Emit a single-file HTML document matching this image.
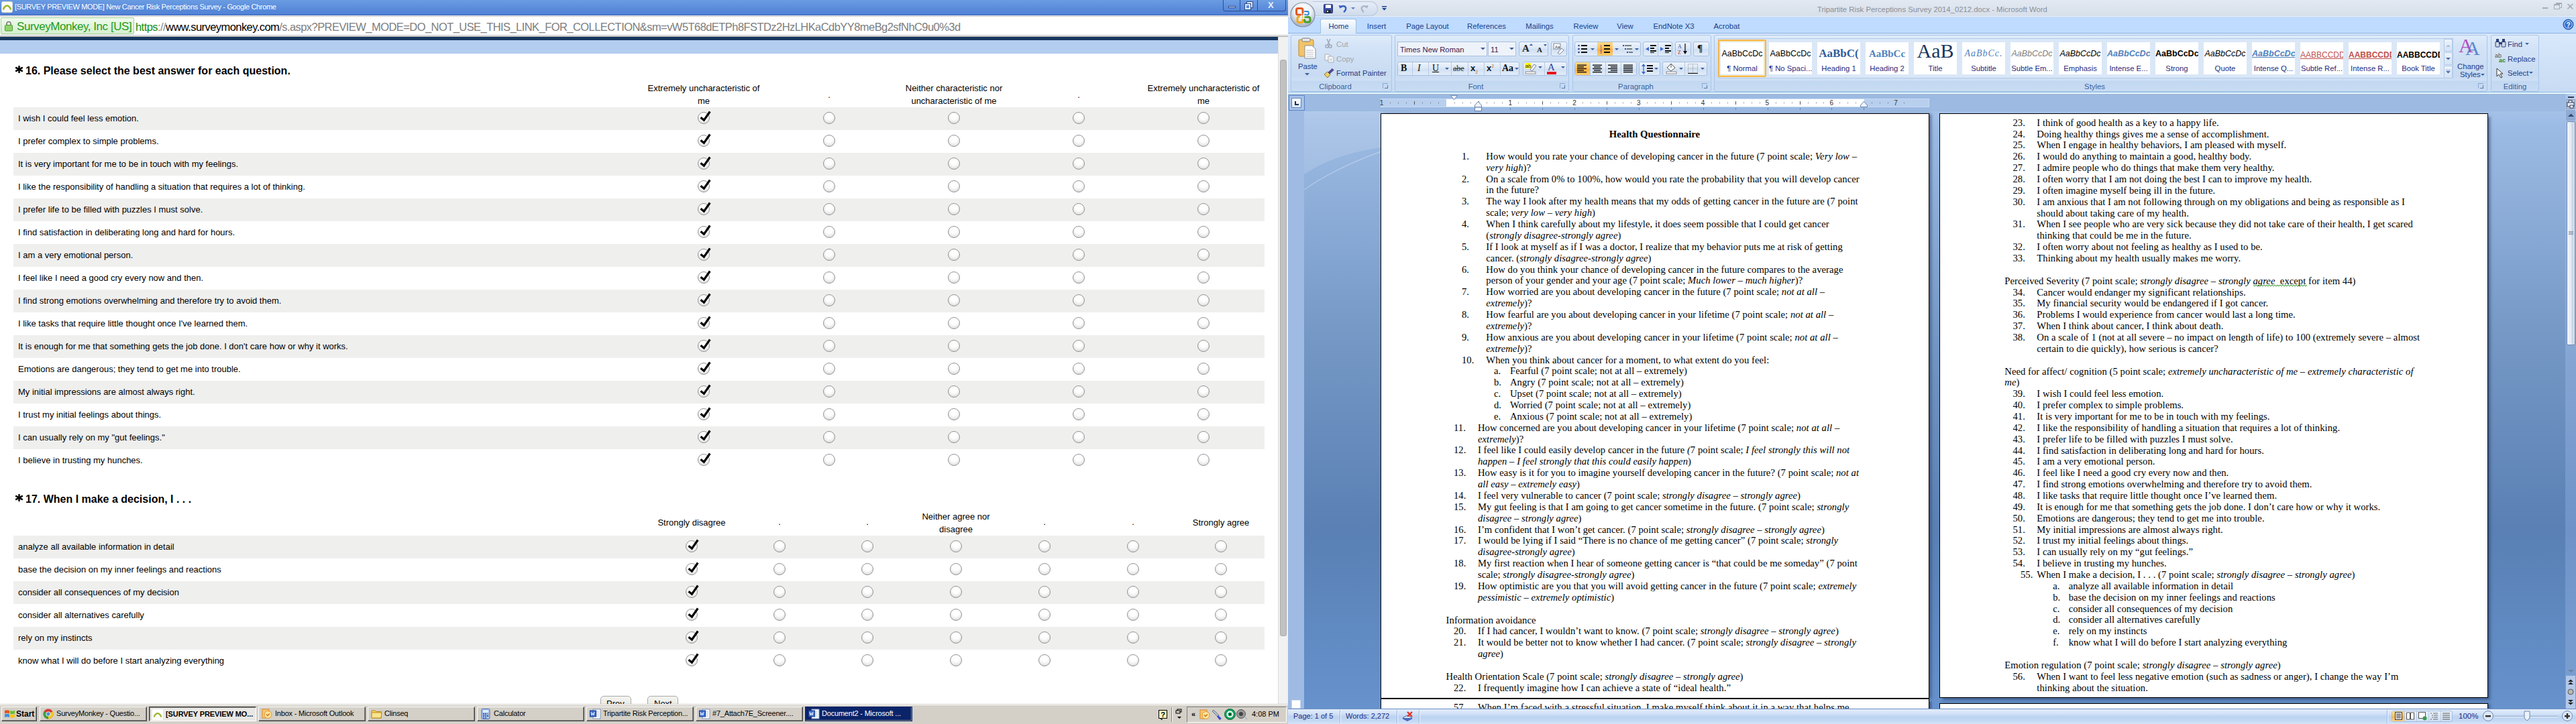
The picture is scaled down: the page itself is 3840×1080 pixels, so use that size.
<!DOCTYPE html>
<html><head><meta charset="utf-8">
<style>
*{margin:0;padding:0;box-sizing:border-box}
html,body{width:3840px;height:1080px;overflow:hidden;background:#fff;position:relative;font-family:"Liberation Sans",sans-serif}
.a{position:absolute}
.t{position:absolute;white-space:nowrap}
/* ---------- LEFT: Chrome ---------- */
#L{position:absolute;left:0;top:0;width:1920px;height:1080px;overflow:hidden;background:#fff}
#ctitle{left:0;top:0;width:1920px;height:23px;background:linear-gradient(#6a9ce2,#4f80d5);border-bottom:1px solid #3b64b2}
#ctitle .tt{left:22px;top:4px;font-size:11px;color:#fff;letter-spacing:-0.35px}
.wbtn{position:absolute;top:0;height:17px;border:1px solid #2d4f96;border-top:none;background:linear-gradient(#6e9fe4,#5686d8)}
#addr{left:0;top:23px;width:1920px;height:32px;background:#fff;box-shadow:inset 0 1px #fafafa,inset 0 2px #c6c6c8,inset 0 -1px #f0f0f0,inset 0 -2px #c3c8d0;border-bottom:1px solid #a9a59e}
#ev{left:1px;top:3px;width:199px;height:25px;border:1px solid #9fd596;border-radius:2px;background:linear-gradient(#effaec,#d6efcf)}
#ev .tx{left:23px;top:2.5px;font-size:17px;color:#1f9c17;letter-spacing:-0.45px}
#url{left:202px;top:7.5px;font-size:16.5px;letter-spacing:-0.56px;color:#000}
#navy{left:0;top:55px;width:1905px;height:5px;background:#17375f}
#lband{left:0;top:60px;width:1905px;height:20px;background:#b3cdf0}
#cscroll{left:1905px;top:55px;width:15px;height:996px;background:#f1f1f1;border-left:1px solid #dcdcdc}
#cthumb{left:1908px;top:89px;width:10px;height:860px;background:#c1c1c1;border:1px solid #ababab;border-radius:3px}
.qh{position:absolute;font-size:16px;font-weight:bold;color:#000;white-space:nowrap}
.row{position:absolute;left:20px;width:1865px;height:34px}
.row.g{background:#efefee}
.row .rt{position:absolute;left:7px;top:10px;font-size:13px;line-height:13px;color:#000;white-space:nowrap}
.hd{position:absolute;font-size:13px;line-height:19px;text-align:center;color:#000;white-space:nowrap}
.rad{position:absolute;width:18px;height:18px;border-radius:50%;border:1px solid #939393;background:radial-gradient(circle at 50% 30%,#ffffff 0%,#fdfdfd 40%,#e6e6e6 72%,#c4c4c4 100%)}
.chk{position:absolute;width:20px;height:20px}
/* taskbar */
#task{left:0;top:1050px;width:1920px;height:30px;background:#d4d0c8;border-top:1px solid #d4d0c8}
#task:before{content:"";position:absolute;left:0;top:0;width:100%;height:1px;background:#fff}
.tb{position:absolute;top:3px;height:22px;background:#d4d0c8;border:1px solid;border-color:#fff #404040 #404040 #fff;box-shadow:inset -1px -1px #808080;font-size:11px;color:#000;white-space:nowrap;overflow:hidden}
.tb .lb{position:absolute;left:24px;top:3px;letter-spacing:-0.2px}
.tb.act{border-color:#404040 #fff #fff #404040;box-shadow:inset 1px 1px #808080;background-color:#e8e6e0;background-image:repeating-conic-gradient(#fff 0 25%,#d4d0c8 0 50%);background-size:2px 2px}
.tb.sel{background:#0a246a;color:#fff;border-color:#0a246a}
</style></head><body>
<div id="L">
 <div id="ctitle" class="a">
  <svg class="a" style="left:2px;top:2px" width="17" height="17" viewBox="0 0 17 17"><rect x="0.5" y="0.5" width="16" height="16" rx="2" fill="#fbfbf6" stroke="#d9dcc6"/><path d="M3 11 Q8.5 2 14 11" fill="none" stroke="#9bb52a" stroke-width="2.6"/><path d="M2 10.5 l3 1.2 -2.4 1.6z M15 10.5 l-3 1.2 2.4 1.6z" fill="#9bb52a"/></svg>
  <div class="t tt">[SURVEY PREVIEW MODE] New Cancer Risk Perceptions Survey - Google Chrome</div>
  <div class="wbtn" style="left:1823px;width:26px;border-radius:0 0 0 4px"><div class="a" style="left:7px;top:9px;width:11px;height:3px;background:#dfe8f6;border:1px solid #2c4c8c"></div></div>
  <div class="wbtn" style="left:1848px;width:27px"><div class="a" style="left:10px;top:3px;width:8px;height:8px;border:2px solid #dfe8f6;outline:1px solid #2c4c8c"></div><div class="a" style="left:7px;top:6px;width:8px;height:8px;border:2px solid #dfe8f6;background:#5c8ad9;outline:1px solid #2c4c8c"></div></div>
  <div class="wbtn" style="left:1874px;width:43px;border-radius:0 0 4px 0"><div class="t" style="left:15px;top:0px;font-size:13px;font-weight:bold;color:#e6eef9">X</div></div>
 </div>
 <div id="addr" class="a">
  <div id="ev" class="a">
   <svg class="a" style="left:5px;top:4px" width="12" height="16" viewBox="0 0 12 16"><path d="M3 7 V4.5 a3 3 0 0 1 6 0 V7" fill="none" stroke="#7a7a7a" stroke-width="1.6"/><rect x="0.5" y="6.5" width="11" height="8.5" rx="1" fill="#8fd46a" stroke="#4f9a35"/></svg>
   <div class="t tx">SurveyMonkey, Inc [US]</div>
  </div>
  <div id="url" class="t"><span style="color:#109010">https</span><span style="color:#8a8a8a">://</span>www.surveymonkey.com<span style="color:#7d7d7d">/s.aspx?PREVIEW_MODE=DO_NOT_USE_THIS_LINK_FOR_COLLECTION&amp;sm=vW5T68dETPh8FSTDz2HzLHKaCdbYY8meBg2sfNhC9u0%3d</span></div>
 </div>
 <div id="navy" class="a"></div>
 <div id="lband" class="a"></div>
 <div id="cscroll" class="a"></div>
 <div id="cthumb" class="a"></div>
 <svg class="a" style="left:22px;top:98px" width="13" height="11" viewBox="0 0 13 11"><g stroke="#000" stroke-width="2.4"><path d="M6.5 0 V11"/><path d="M1.2 2.6 L11.8 8.4"/><path d="M1.2 8.4 L11.8 2.6"/></g></svg>
<div class="qh" style="left:38px;top:97px">16. Please select the best answer for each question.</div>
<div class="hd" style="left:939px;width:220px;top:122px">Extremely uncharacteristic of<br>me</div>
<div class="hd" style="left:1186px;width:100px;top:132px">.</div>
<div class="hd" style="left:1312px;width:220px;top:122px">Neither characteristic nor<br>uncharacteristic of me</div>
<div class="hd" style="left:1558px;width:100px;top:132px">.</div>
<div class="hd" style="left:1684px;width:220px;top:122px">Extremely uncharacteristic of<br>me</div>
<div class="row g" style="top:160px"><div class="rt">I wish I could feel less emotion.</div></div>
<div class="rad" style="left:1040px;top:167px"></div>
<div class="rad" style="left:1227px;top:167px"></div>
<div class="rad" style="left:1413px;top:167px"></div>
<div class="rad" style="left:1599px;top:167px"></div>
<div class="rad" style="left:1785px;top:167px"></div>
<svg class="chk" style="left:1041px;top:164px" width="20" height="20" viewBox="0 0 20 20"><path d="M3.5 11.2 L8.4 15.2 L17.3 2.5" fill="none" stroke="#000" stroke-width="3.2" stroke-linejoin="miter"/></svg>
<div class="row" style="top:194px"><div class="rt">I prefer complex to simple problems.</div></div>
<div class="rad" style="left:1040px;top:201px"></div>
<div class="rad" style="left:1227px;top:201px"></div>
<div class="rad" style="left:1413px;top:201px"></div>
<div class="rad" style="left:1599px;top:201px"></div>
<div class="rad" style="left:1785px;top:201px"></div>
<svg class="chk" style="left:1041px;top:198px" width="20" height="20" viewBox="0 0 20 20"><path d="M3.5 11.2 L8.4 15.2 L17.3 2.5" fill="none" stroke="#000" stroke-width="3.2" stroke-linejoin="miter"/></svg>
<div class="row g" style="top:228px"><div class="rt">It is very important for me to be in touch with my feelings.</div></div>
<div class="rad" style="left:1040px;top:235px"></div>
<div class="rad" style="left:1227px;top:235px"></div>
<div class="rad" style="left:1413px;top:235px"></div>
<div class="rad" style="left:1599px;top:235px"></div>
<div class="rad" style="left:1785px;top:235px"></div>
<svg class="chk" style="left:1041px;top:232px" width="20" height="20" viewBox="0 0 20 20"><path d="M3.5 11.2 L8.4 15.2 L17.3 2.5" fill="none" stroke="#000" stroke-width="3.2" stroke-linejoin="miter"/></svg>
<div class="row" style="top:262px"><div class="rt">I like the responsibility of handling a situation that requires a lot of thinking.</div></div>
<div class="rad" style="left:1040px;top:269px"></div>
<div class="rad" style="left:1227px;top:269px"></div>
<div class="rad" style="left:1413px;top:269px"></div>
<div class="rad" style="left:1599px;top:269px"></div>
<div class="rad" style="left:1785px;top:269px"></div>
<svg class="chk" style="left:1041px;top:266px" width="20" height="20" viewBox="0 0 20 20"><path d="M3.5 11.2 L8.4 15.2 L17.3 2.5" fill="none" stroke="#000" stroke-width="3.2" stroke-linejoin="miter"/></svg>
<div class="row g" style="top:296px"><div class="rt">I prefer life to be filled with puzzles I must solve.</div></div>
<div class="rad" style="left:1040px;top:303px"></div>
<div class="rad" style="left:1227px;top:303px"></div>
<div class="rad" style="left:1413px;top:303px"></div>
<div class="rad" style="left:1599px;top:303px"></div>
<div class="rad" style="left:1785px;top:303px"></div>
<svg class="chk" style="left:1041px;top:300px" width="20" height="20" viewBox="0 0 20 20"><path d="M3.5 11.2 L8.4 15.2 L17.3 2.5" fill="none" stroke="#000" stroke-width="3.2" stroke-linejoin="miter"/></svg>
<div class="row" style="top:330px"><div class="rt">I find satisfaction in deliberating long and hard for hours.</div></div>
<div class="rad" style="left:1040px;top:337px"></div>
<div class="rad" style="left:1227px;top:337px"></div>
<div class="rad" style="left:1413px;top:337px"></div>
<div class="rad" style="left:1599px;top:337px"></div>
<div class="rad" style="left:1785px;top:337px"></div>
<svg class="chk" style="left:1041px;top:334px" width="20" height="20" viewBox="0 0 20 20"><path d="M3.5 11.2 L8.4 15.2 L17.3 2.5" fill="none" stroke="#000" stroke-width="3.2" stroke-linejoin="miter"/></svg>
<div class="row g" style="top:364px"><div class="rt">I am a very emotional person.</div></div>
<div class="rad" style="left:1040px;top:371px"></div>
<div class="rad" style="left:1227px;top:371px"></div>
<div class="rad" style="left:1413px;top:371px"></div>
<div class="rad" style="left:1599px;top:371px"></div>
<div class="rad" style="left:1785px;top:371px"></div>
<svg class="chk" style="left:1041px;top:368px" width="20" height="20" viewBox="0 0 20 20"><path d="M3.5 11.2 L8.4 15.2 L17.3 2.5" fill="none" stroke="#000" stroke-width="3.2" stroke-linejoin="miter"/></svg>
<div class="row" style="top:398px"><div class="rt">I feel like I need a good cry every now and then.</div></div>
<div class="rad" style="left:1040px;top:405px"></div>
<div class="rad" style="left:1227px;top:405px"></div>
<div class="rad" style="left:1413px;top:405px"></div>
<div class="rad" style="left:1599px;top:405px"></div>
<div class="rad" style="left:1785px;top:405px"></div>
<svg class="chk" style="left:1041px;top:402px" width="20" height="20" viewBox="0 0 20 20"><path d="M3.5 11.2 L8.4 15.2 L17.3 2.5" fill="none" stroke="#000" stroke-width="3.2" stroke-linejoin="miter"/></svg>
<div class="row g" style="top:432px"><div class="rt">I find strong emotions overwhelming and therefore try to avoid them.</div></div>
<div class="rad" style="left:1040px;top:439px"></div>
<div class="rad" style="left:1227px;top:439px"></div>
<div class="rad" style="left:1413px;top:439px"></div>
<div class="rad" style="left:1599px;top:439px"></div>
<div class="rad" style="left:1785px;top:439px"></div>
<svg class="chk" style="left:1041px;top:436px" width="20" height="20" viewBox="0 0 20 20"><path d="M3.5 11.2 L8.4 15.2 L17.3 2.5" fill="none" stroke="#000" stroke-width="3.2" stroke-linejoin="miter"/></svg>
<div class="row" style="top:466px"><div class="rt">I like tasks that require little thought once I've learned them.</div></div>
<div class="rad" style="left:1040px;top:473px"></div>
<div class="rad" style="left:1227px;top:473px"></div>
<div class="rad" style="left:1413px;top:473px"></div>
<div class="rad" style="left:1599px;top:473px"></div>
<div class="rad" style="left:1785px;top:473px"></div>
<svg class="chk" style="left:1041px;top:470px" width="20" height="20" viewBox="0 0 20 20"><path d="M3.5 11.2 L8.4 15.2 L17.3 2.5" fill="none" stroke="#000" stroke-width="3.2" stroke-linejoin="miter"/></svg>
<div class="row g" style="top:500px"><div class="rt">It is enough for me that something gets the job done. I don't care how or why it works.</div></div>
<div class="rad" style="left:1040px;top:507px"></div>
<div class="rad" style="left:1227px;top:507px"></div>
<div class="rad" style="left:1413px;top:507px"></div>
<div class="rad" style="left:1599px;top:507px"></div>
<div class="rad" style="left:1785px;top:507px"></div>
<svg class="chk" style="left:1041px;top:504px" width="20" height="20" viewBox="0 0 20 20"><path d="M3.5 11.2 L8.4 15.2 L17.3 2.5" fill="none" stroke="#000" stroke-width="3.2" stroke-linejoin="miter"/></svg>
<div class="row" style="top:534px"><div class="rt">Emotions are dangerous; they tend to get me into trouble.</div></div>
<div class="rad" style="left:1040px;top:541px"></div>
<div class="rad" style="left:1227px;top:541px"></div>
<div class="rad" style="left:1413px;top:541px"></div>
<div class="rad" style="left:1599px;top:541px"></div>
<div class="rad" style="left:1785px;top:541px"></div>
<svg class="chk" style="left:1041px;top:538px" width="20" height="20" viewBox="0 0 20 20"><path d="M3.5 11.2 L8.4 15.2 L17.3 2.5" fill="none" stroke="#000" stroke-width="3.2" stroke-linejoin="miter"/></svg>
<div class="row g" style="top:568px"><div class="rt">My initial impressions are almost always right.</div></div>
<div class="rad" style="left:1040px;top:575px"></div>
<div class="rad" style="left:1227px;top:575px"></div>
<div class="rad" style="left:1413px;top:575px"></div>
<div class="rad" style="left:1599px;top:575px"></div>
<div class="rad" style="left:1785px;top:575px"></div>
<svg class="chk" style="left:1041px;top:572px" width="20" height="20" viewBox="0 0 20 20"><path d="M3.5 11.2 L8.4 15.2 L17.3 2.5" fill="none" stroke="#000" stroke-width="3.2" stroke-linejoin="miter"/></svg>
<div class="row" style="top:602px"><div class="rt">I trust my initial feelings about things.</div></div>
<div class="rad" style="left:1040px;top:609px"></div>
<div class="rad" style="left:1227px;top:609px"></div>
<div class="rad" style="left:1413px;top:609px"></div>
<div class="rad" style="left:1599px;top:609px"></div>
<div class="rad" style="left:1785px;top:609px"></div>
<svg class="chk" style="left:1041px;top:606px" width="20" height="20" viewBox="0 0 20 20"><path d="M3.5 11.2 L8.4 15.2 L17.3 2.5" fill="none" stroke="#000" stroke-width="3.2" stroke-linejoin="miter"/></svg>
<div class="row g" style="top:636px"><div class="rt">I can usually rely on my &quot;gut feelings.&quot;</div></div>
<div class="rad" style="left:1040px;top:643px"></div>
<div class="rad" style="left:1227px;top:643px"></div>
<div class="rad" style="left:1413px;top:643px"></div>
<div class="rad" style="left:1599px;top:643px"></div>
<div class="rad" style="left:1785px;top:643px"></div>
<svg class="chk" style="left:1041px;top:640px" width="20" height="20" viewBox="0 0 20 20"><path d="M3.5 11.2 L8.4 15.2 L17.3 2.5" fill="none" stroke="#000" stroke-width="3.2" stroke-linejoin="miter"/></svg>
<div class="row" style="top:670px"><div class="rt">I believe in trusting my hunches.</div></div>
<div class="rad" style="left:1040px;top:677px"></div>
<div class="rad" style="left:1227px;top:677px"></div>
<div class="rad" style="left:1413px;top:677px"></div>
<div class="rad" style="left:1599px;top:677px"></div>
<div class="rad" style="left:1785px;top:677px"></div>
<svg class="chk" style="left:1041px;top:674px" width="20" height="20" viewBox="0 0 20 20"><path d="M3.5 11.2 L8.4 15.2 L17.3 2.5" fill="none" stroke="#000" stroke-width="3.2" stroke-linejoin="miter"/></svg>
<svg class="a" style="left:22px;top:737px" width="13" height="11" viewBox="0 0 13 11"><g stroke="#000" stroke-width="2.4"><path d="M6.5 0 V11"/><path d="M1.2 2.6 L11.8 8.4"/><path d="M1.2 8.4 L11.8 2.6"/></g></svg>
<div class="qh" style="left:38px;top:736px">17. When I make a decision, I . . .</div>
<div class="hd" style="left:961px;width:140px;top:770px">Strongly disagree</div>
<div class="hd" style="left:1092px;width:140px;top:769px">.</div>
<div class="hd" style="left:1223px;width:140px;top:769px">.</div>
<div class="hd" style="left:1355px;width:140px;top:761px">Neither agree nor<br>disagree</div>
<div class="hd" style="left:1487px;width:140px;top:769px">.</div>
<div class="hd" style="left:1619px;width:140px;top:769px">.</div>
<div class="hd" style="left:1750px;width:140px;top:770px">Strongly agree</div>
<div class="row g" style="top:799px"><div class="rt">analyze all available information in detail</div></div>
<div class="rad" style="left:1022px;top:806px"></div>
<div class="rad" style="left:1153px;top:806px"></div>
<div class="rad" style="left:1284px;top:806px"></div>
<div class="rad" style="left:1416px;top:806px"></div>
<div class="rad" style="left:1548px;top:806px"></div>
<div class="rad" style="left:1680px;top:806px"></div>
<div class="rad" style="left:1811px;top:806px"></div>
<svg class="chk" style="left:1023px;top:803px" width="20" height="20" viewBox="0 0 20 20"><path d="M3.5 11.2 L8.4 15.2 L17.3 2.5" fill="none" stroke="#000" stroke-width="3.2" stroke-linejoin="miter"/></svg>
<div class="row" style="top:833px"><div class="rt">base the decision on my inner feelings and reactions</div></div>
<div class="rad" style="left:1022px;top:840px"></div>
<div class="rad" style="left:1153px;top:840px"></div>
<div class="rad" style="left:1284px;top:840px"></div>
<div class="rad" style="left:1416px;top:840px"></div>
<div class="rad" style="left:1548px;top:840px"></div>
<div class="rad" style="left:1680px;top:840px"></div>
<div class="rad" style="left:1811px;top:840px"></div>
<svg class="chk" style="left:1023px;top:837px" width="20" height="20" viewBox="0 0 20 20"><path d="M3.5 11.2 L8.4 15.2 L17.3 2.5" fill="none" stroke="#000" stroke-width="3.2" stroke-linejoin="miter"/></svg>
<div class="row g" style="top:867px"><div class="rt">consider all consequences of my decision</div></div>
<div class="rad" style="left:1022px;top:874px"></div>
<div class="rad" style="left:1153px;top:874px"></div>
<div class="rad" style="left:1284px;top:874px"></div>
<div class="rad" style="left:1416px;top:874px"></div>
<div class="rad" style="left:1548px;top:874px"></div>
<div class="rad" style="left:1680px;top:874px"></div>
<div class="rad" style="left:1811px;top:874px"></div>
<svg class="chk" style="left:1023px;top:871px" width="20" height="20" viewBox="0 0 20 20"><path d="M3.5 11.2 L8.4 15.2 L17.3 2.5" fill="none" stroke="#000" stroke-width="3.2" stroke-linejoin="miter"/></svg>
<div class="row" style="top:901px"><div class="rt">consider all alternatives carefully</div></div>
<div class="rad" style="left:1022px;top:908px"></div>
<div class="rad" style="left:1153px;top:908px"></div>
<div class="rad" style="left:1284px;top:908px"></div>
<div class="rad" style="left:1416px;top:908px"></div>
<div class="rad" style="left:1548px;top:908px"></div>
<div class="rad" style="left:1680px;top:908px"></div>
<div class="rad" style="left:1811px;top:908px"></div>
<svg class="chk" style="left:1023px;top:905px" width="20" height="20" viewBox="0 0 20 20"><path d="M3.5 11.2 L8.4 15.2 L17.3 2.5" fill="none" stroke="#000" stroke-width="3.2" stroke-linejoin="miter"/></svg>
<div class="row g" style="top:935px"><div class="rt">rely on my instincts</div></div>
<div class="rad" style="left:1022px;top:942px"></div>
<div class="rad" style="left:1153px;top:942px"></div>
<div class="rad" style="left:1284px;top:942px"></div>
<div class="rad" style="left:1416px;top:942px"></div>
<div class="rad" style="left:1548px;top:942px"></div>
<div class="rad" style="left:1680px;top:942px"></div>
<div class="rad" style="left:1811px;top:942px"></div>
<svg class="chk" style="left:1023px;top:939px" width="20" height="20" viewBox="0 0 20 20"><path d="M3.5 11.2 L8.4 15.2 L17.3 2.5" fill="none" stroke="#000" stroke-width="3.2" stroke-linejoin="miter"/></svg>
<div class="row" style="top:969px"><div class="rt">know what I will do before I start analyzing everything</div></div>
<div class="rad" style="left:1022px;top:976px"></div>
<div class="rad" style="left:1153px;top:976px"></div>
<div class="rad" style="left:1284px;top:976px"></div>
<div class="rad" style="left:1416px;top:976px"></div>
<div class="rad" style="left:1548px;top:976px"></div>
<div class="rad" style="left:1680px;top:976px"></div>
<div class="rad" style="left:1811px;top:976px"></div>
<svg class="chk" style="left:1023px;top:973px" width="20" height="20" viewBox="0 0 20 20"><path d="M3.5 11.2 L8.4 15.2 L17.3 2.5" fill="none" stroke="#000" stroke-width="3.2" stroke-linejoin="miter"/></svg>
<div class="a" style="left:895px;top:1038px;width:46px;height:20px;border:1px solid #a9a9a9;border-radius:5px;background:linear-gradient(#f4f4f0,#e6e6e0)"><div class="t" style="left:8px;top:3px;font-size:13px">Prev</div></div>
<div class="a" style="left:965px;top:1038px;width:46px;height:20px;border:1px solid #a9a9a9;border-radius:5px;background:linear-gradient(#f4f4f0,#e6e6e0)"><div class="t" style="left:9px;top:3px;font-size:13px">Next</div></div>
 <div id="task" class="a">
 <div class="tb" style="left:2px;width:53px;font-weight:bold;font-size:12px"><svg class="a" style="left:3px;top:2px" width="17" height="16" viewBox="0 0 17 16"><path d="M1 3 Q4 1.5 8 3 V7.5 Q4 6 1 7.5z" fill="#e8531f"/><path d="M9 3 Q12 4.5 16 3 V7.5 Q12 9 9 7.5z" fill="#6cbf2f"/><path d="M1 8.5 Q4 7 8 8.5 V13 Q4 11.5 1 13z" fill="#3d8de0"/><path d="M9 8.5 Q12 10 16 8.5 V13 Q12 14.5 9 13z" fill="#f5c417"/></svg><div class="t" style="left:21px;top:3px">Start</div></div>
 <div class="tb" style="left:59px;width:160px"><svg class="a" style="left:4px;top:2px" width="16" height="16" viewBox="0 0 16 16"><circle cx="8" cy="8" r="7.5" fill="#d93b30"/><path d="M8 8 L1.5 4.3 A7.5 7.5 0 0 0 8 15.5z" fill="#3ba33b"/><path d="M8 8 L14.5 4.3 A7.5 7.5 0 0 1 8 15.5z" fill="#f5c71a"/><circle cx="8" cy="8" r="3.6" fill="#fff"/><circle cx="8" cy="8" r="2.7" fill="#4a8ee0"/></svg><div class="lb">SurveyMonkey - Questio...</div></div>
 <div class="tb act" style="left:222px;width:160px;font-weight:bold"><svg class="a" style="left:4px;top:3px" width="16" height="16" viewBox="0 0 17 17"><rect x="0" y="0" width="17" height="17" fill="#fff"/><path d="M3 11 Q8.5 2 14 11" fill="none" stroke="#9bb52a" stroke-width="2.6"/><path d="M2 10.5 l3 1.2 -2.4 1.6z M15 10.5 l-3 1.2 2.4 1.6z" fill="#9bb52a"/></svg><div class="lb" style="top:4px;letter-spacing:-0.1px">[SURVEY PREVIEW MO...</div></div>
 <div class="tb" style="left:385px;width:160px"><svg class="a" style="left:4px;top:2px" width="16" height="16" viewBox="0 0 16 16"><rect x="1" y="1" width="10" height="13" fill="#f7c870" stroke="#d9862a"/><circle cx="9.5" cy="9" r="5.5" fill="#fbe39a" stroke="#e0962f"/><path d="M7 8.5 l2 2 3-3" stroke="#c86a12" fill="none" stroke-width="1.3"/></svg><div class="lb">Inbox - Microsoft Outlook</div></div>
 <div class="tb" style="left:548px;width:160px"><svg class="a" style="left:4px;top:2px" width="17" height="15" viewBox="0 0 17 15"><path d="M1 3 h5 l1.5 1.5 h8 v9.5 h-14.5z" fill="#f5d66a" stroke="#b98a1b"/><path d="M1 6 h15 l-1 8 h-14z" fill="#fbe58e" stroke="#b98a1b"/></svg><div class="lb">Clinseq</div></div>
 <div class="tb" style="left:711px;width:160px"><svg class="a" style="left:5px;top:2px" width="14" height="16" viewBox="0 0 14 16"><rect x="1" y="0.5" width="12" height="15" rx="1.5" fill="#a8c4ec" stroke="#4a6fb8"/><rect x="3" y="2.5" width="8" height="3" fill="#e6f0fb"/><g fill="#3558a8"><rect x="3" y="7" width="2" height="2"/><rect x="6" y="7" width="2" height="2"/><rect x="9" y="7" width="2" height="2" fill="#e8752a"/><rect x="3" y="10" width="2" height="2"/><rect x="6" y="10" width="2" height="2"/><rect x="9" y="10" width="2" height="2"/><rect x="3" y="13" width="2" height="1.5"/><rect x="6" y="13" width="2" height="1.5"/></g></svg><div class="lb">Calculator</div></div>
 <div class="tb" style="left:874px;width:160px"><svg class="a wi" style="left:4px;top:2px" width="17" height="16" viewBox="0 0 17 16"><rect x="5" y="1" width="11" height="14" fill="#fff" stroke="#7d95c0"/><path d="M7 5h7M7 8h7M7 11h7" stroke="#9fb4d8"/><rect x="0.5" y="3" width="9" height="9" fill="#3b6fd0" stroke="#1d3f8e"/><path d="M2 5 l1.2 5 1.3-3.5 1.3 3.5 1.2-5" stroke="#fff" fill="none" stroke-width="1"/></svg><div class="lb">Tripartite Risk Perception...</div></div>
 <div class="tb" style="left:1037px;width:160px"><svg class="a" style="left:4px;top:2px" width="17" height="16" viewBox="0 0 17 16"><rect x="5" y="1" width="11" height="14" fill="#fff" stroke="#7d95c0"/><path d="M7 5h7M7 8h7M7 11h7" stroke="#9fb4d8"/><rect x="0.5" y="3" width="9" height="9" fill="#3b6fd0" stroke="#1d3f8e"/><path d="M2 5 l1.2 5 1.3-3.5 1.3 3.5 1.2-5" stroke="#fff" fill="none" stroke-width="1"/></svg><div class="lb">#7_Attach7E_Screener....</div></div>
 <div class="tb sel" style="left:1200px;width:160px"><svg class="a" style="left:4px;top:2px" width="17" height="16" viewBox="0 0 17 16"><rect x="5" y="1" width="11" height="14" fill="#fff" stroke="#7d95c0"/><path d="M7 5h7M7 8h7M7 11h7" stroke="#9fb4d8"/><rect x="0.5" y="3" width="9" height="9" fill="#3b6fd0" stroke="#1d3f8e"/><path d="M2 5 l1.2 5 1.3-3.5 1.3 3.5 1.2-5" stroke="#fff" fill="none" stroke-width="1"/></svg><div class="lb">Document2 - Microsoft ...</div></div>
 <!-- quick help -->
 <svg class="a" style="left:1727px;top:8px" width="14" height="16" viewBox="0 0 14 16"><rect x="0.5" y="0.5" width="12" height="12" fill="#ffffc0" stroke="#000"/><path d="M3 13 l2 2 v-2" fill="#ffffc0" stroke="#000"/><text x="6.5" y="10.5" font-size="11" font-weight="bold" text-anchor="middle" font-family="Liberation Sans">?</text></svg>
 <div class="a" style="left:1746px;top:4px;width:2px;height:22px;border-left:1px solid #808080;border-right:1px solid #fff"></div>
 <svg class="a" style="left:1752px;top:6px" width="12" height="18" viewBox="0 0 12 18"><rect x="3" y="1" width="6" height="4" fill="none" stroke="#000"/><rect x="1" y="3" width="6" height="4" fill="#d4d0c8" stroke="#000"/><path d="M3 12 h6 l-3 3z" fill="#000"/></svg>
 <div class="a" style="left:1769px;top:3px;width:149px;height:24px;border:1px solid;border-color:#808080 #fff #fff #808080"></div>
 <div class="t" style="left:1776px;top:8px;font-size:11px;font-weight:bold;letter-spacing:-1px">&#171;</div>
 <svg class="a" style="left:1788px;top:7px" width="16" height="16" viewBox="0 0 16 16"><rect x="1" y="1" width="10" height="13" fill="#f7c870" stroke="#d9862a"/><circle cx="9.5" cy="9" r="5.5" fill="#fbe39a" stroke="#e0962f"/><path d="M7 8.5 l2 2 3-3" stroke="#c86a12" fill="none" stroke-width="1.3"/></svg>
 <svg class="a" style="left:1807px;top:6px" width="16" height="17" viewBox="0 0 16 17"><path d="M2 2 l8 8 -2 2 -8 -8z" fill="#b8c0cc" stroke="#6a7484"/><path d="M9 10 l5 5 -3 2 -4-5z" fill="#3a4ad8"/></svg>
 <svg class="a" style="left:1825px;top:6px" width="17" height="17" viewBox="0 0 17 17"><circle cx="8.5" cy="8.5" r="8" fill="#17a060" stroke="#0b6a3a"/><circle cx="8.5" cy="8.5" r="5" fill="#fff"/><circle cx="8.5" cy="8.5" r="3" fill="#17a060"/><circle cx="8.5" cy="8.5" r="1.2" fill="#000"/></svg>
 <svg class="a" style="left:1843px;top:6px" width="17" height="17" viewBox="0 0 17 17"><circle cx="7" cy="8" r="6.5" fill="#9a9a9a" stroke="#555"/><circle cx="7" cy="8" r="3" fill="#444"/><path d="M11 12 q3 1 5 4" stroke="#8aa0d8" fill="none"/></svg>
 <div class="t" style="left:1866px;top:8px;font-size:11px">4:08 PM</div>
</div>

</div>
<style>
#W{position:absolute;left:1920px;top:0;width:1920px;height:1080px;overflow:hidden;background:#c4d8f1}
#W .a{position:absolute}
#W .t{position:absolute;white-space:nowrap}
.wtab{position:absolute;top:33px;font-size:11.3px;color:#15428b;white-space:nowrap;text-align:center;width:100px;margin-left:-50px;line-height:12px}
.grp{position:absolute;top:52px;height:85px;border:1px solid #a8c6ea;border-radius:3px;background:linear-gradient(#dfebfa 0,#d5e4f7 14px,#c8dbf2 60px,#cfe0f5 67px,#c2d8f1 68px,#c9dcf3 84px)}
.glab{position:absolute;bottom:1px;left:0;width:100%;text-align:center;font-size:11.3px;color:#3a5f9e;line-height:12px}
.launch{position:absolute;right:5px;bottom:4px;width:8px;height:8px;border-left:1px solid #8ba9d2;border-top:1px solid #8ba9d2}
.launch:after{content:"";position:absolute;left:2px;top:2px;width:4px;height:4px;border-right:1px solid #5577aa;border-bottom:1px solid #5577aa}
.rl{position:absolute;font-size:11.3px;color:#1f3b88;white-space:nowrap;line-height:12px}
.btnbox{position:absolute;border:1px solid #a6bfe0;border-radius:3px;background:linear-gradient(#eef4fc,#dae6f6 50%,#cfdff3 51%,#e3edf9)}
.stb{position:absolute;top:63px;width:64px;height:48px;background:#fff;text-align:center;overflow:hidden}
.stb .s1{position:absolute;left:0;top:9px;width:64px;font-size:15px;line-height:16px;white-space:nowrap;overflow:hidden}
.stb .s2{position:absolute;left:0;top:33px;width:64px;font-size:11.3px;color:#1f2a80;line-height:12px;white-space:nowrap}
.page{position:absolute;background:#fff;border:1px solid #000;box-shadow:3px 3px 3px rgba(30,50,90,.55)}
.ln{position:absolute;white-space:nowrap;font-family:"Liberation Serif",serif;font-size:14.67px;line-height:17px;color:#000;letter-spacing:0.04px}
.ln i{font-style:italic}
.sb{position:absolute;font-size:11px;color:#242c80;white-space:nowrap;line-height:12px}
</style>
<div id="W">
<div class="a" style="left:0;top:0;width:1920px;height:25px;background:linear-gradient(#e3e9f2,#dbe3ed 60%,#d7dfea);border-bottom:1px solid #e9eff7"></div>
<div class="a" style="left:0;top:25px;width:1920px;height:25px;background:#bfdbff;border-bottom:1px solid #8db2e3"></div>
<div class="a" style="left:37px;top:2px;width:97px;height:22px;border-radius:0 11px 11px 0;background:linear-gradient(#e6edf7,#cfdbeb);border:1px solid #b7c8e0;border-left:none"></div>
<svg class="a" style="left:53px;top:6px" width="14" height="14" viewBox="0 0 14 14"><rect x="0.5" y="0.5" width="13" height="13" rx="1" fill="#3c4fa8" stroke="#22306e"/><rect x="3" y="1" width="8" height="5" fill="#fff"/><rect x="3.5" y="9" width="7" height="4" fill="#222"/><rect x="5" y="10" width="2" height="2" fill="#fff"/></svg>
<svg class="a" style="left:75px;top:6px" width="14" height="14" viewBox="0 0 14 14"><path d="M3 5 Q8 1 11 5 Q12 9 8 12" fill="none" stroke="#3560c0" stroke-width="2.4"/><path d="M0.5 2 L5 2.5 L2.5 7z" fill="#3560c0"/></svg>
<svg class="a" style="left:94px;top:11px" width="6" height="4" viewBox="0 0 6 4"><path d="M0 0h6l-3 3z" fill="#5a7db8"/></svg>
<svg class="a" style="left:107px;top:6px" width="13" height="14" viewBox="0 0 13 14"><path d="M10 5 Q6 1 3 5 Q2 9 6 12" fill="none" stroke="#a6b4c8" stroke-width="2.2"/><path d="M12.5 2 L8.5 2.5 L11 7z" fill="#a6b4c8"/></svg>
<svg class="a" style="left:140px;top:9px" width="7" height="7" viewBox="0 0 7 7"><rect x="0" y="0" width="7" height="1.5" fill="#15428b"/><path d="M0 3h7l-3.5 3.5z" fill="#15428b"/></svg>
<svg class="a" style="left:2px;top:2px" width="40" height="40" viewBox="0 0 40 40"><defs><radialGradient id="ob" cx="50%" cy="30%" r="65%"><stop offset="0" stop-color="#ffffff"/><stop offset=".55" stop-color="#eef1f6"/><stop offset="1" stop-color="#aab6c8"/></radialGradient></defs><circle cx="20" cy="20" r="18" fill="url(#ob)" stroke="#8593a8" stroke-width="1.2"/><g fill="none" stroke-linecap="round"><path d="M20 17 V13 Q20 10.5 17.5 10.5 H13 Q10.5 10.5 10.5 13 V17.5 Q10.5 20 13 20 H16.5" stroke="#e2581c" stroke-width="3"/><path d="M23 15 H27 Q28.7 15 28.7 16.7 V18.5 Q28.7 20.2 27 20.2 H26" stroke="#2f86d8" stroke-width="2"/><path d="M14.5 23 Q12 23 12 25.5 V29 Q12 31.5 14.5 31.5 H17.5 Q20 31.5 20 29 V27.5" stroke="#f6a90f" stroke-width="3"/><path d="M25.5 23.5 H28.5 Q31 23.5 31 26 V28.5 Q31 31 28.5 31 H25 Q22.7 31 22.7 28.5 V27.5" stroke="#4c9e2b" stroke-width="3"/></g><circle cx="19.6" cy="19.8" r="1.3" fill="#e2581c"/><circle cx="23.6" cy="19.8" r="1.3" fill="#2f86d8"/><circle cx="19.6" cy="23.6" r="1.3" fill="#f6c04a"/><circle cx="23.6" cy="23.6" r="1.3" fill="#4c9e2b"/></svg>
<div class="t" style="left:789px;top:8px;font-size:11.3px;color:#8a8f98">Tripartite Risk Perceptions Survey 2014_0212.docx - Microsoft Word</div>
<div class="a" style="left:1870px;top:11px;width:8px;height:2px;background:#a3acb8"></div>
<div class="a" style="left:1890px;top:4px;width:9px;height:8px;border:1px solid #a3acb8;border-top-width:2px"></div><div class="a" style="left:1887px;top:6px;width:9px;height:8px;border:1px solid #a3acb8;border-top-width:2px;background:#dfe5ee"></div>
<div class="t" style="left:1905px;top:1px;font-size:15px;color:#a3acb8">&#x2715;</div>
<div class="a" style="left:48px;top:28px;width:54px;height:23px;border:1px solid #9ebfdb;border-bottom:none;border-radius:3px 3px 0 0;background:linear-gradient(#fbfdff,#e3eefb 60%,#d9e7f8)"></div>
<div class="wtab" style="left:75.5px">Home</div>
<div class="wtab" style="left:132px">Insert</div>
<div class="wtab" style="left:208px">Page Layout</div>
<div class="wtab" style="left:296px">References</div>
<div class="wtab" style="left:375px">Mailings</div>
<div class="wtab" style="left:444px">Review</div>
<div class="wtab" style="left:502.5px">View</div>
<div class="wtab" style="left:575px">EndNote X3</div>
<div class="wtab" style="left:654px">Acrobat</div>
<svg class="a" style="left:1900px;top:28px" width="17" height="17" viewBox="0 0 17 17"><circle cx="8.5" cy="8.5" r="7.5" fill="#2f6fcf" stroke="#1a4a9a"/><circle cx="8.5" cy="8.5" r="5.8" fill="none" stroke="#fff" stroke-width="0.8"/><text x="8.5" y="12.5" font-size="10" font-weight="bold" fill="#fff" text-anchor="middle" font-family="Liberation Sans">?</text></svg>
<div class="a" style="left:0;top:50px;width:1920px;height:88px;background:linear-gradient(#d9e8fb,#c7dbf3);border-bottom:1px solid #90b6dc"></div><div class="a" style="left:0;top:138px;width:1920px;height:2px;background:#e2f8ff"></div>
<div class="grp" style="left:4px;width:151px"><div class="glab" style="padding-right:18px">Clipboard</div><div class="launch"></div></div>
<div class="grp" style="left:159px;width:260px"><div class="glab" style="padding-right:18px">Font</div><div class="launch"></div></div>
<div class="grp" style="left:424px;width:207px"><div class="glab" style="padding-right:18px">Paragraph</div><div class="launch"></div></div>
<div class="grp" style="left:635px;width:1153px"><div class="glab" style="padding-right:18px">Styles</div><div class="launch"></div></div>
<div class="grp" style="left:1793px;width:72px"><div class="glab" style="padding-right:0px">Editing</div></div>
<svg class="a" style="left:15px;top:56px" width="28" height="32" viewBox="0 0 28 32"><rect x="1" y="3" width="22" height="25" rx="2" fill="#f3c466" stroke="#c48a2c"/><rect x="6" y="1" width="12" height="5" rx="1.5" fill="#e8e8e8" stroke="#777"/><path d="M10 12 h11 l5 5 v14 h-16z" fill="#fff" stroke="#8a8f99"/><path d="M12 19h11M12 22h11M12 25h11M12 28h11" stroke="#b8bcc4"/></svg>
<div class="t" style="left:15px;top:93.3px;font-size:11.3px;line-height:12px;color:#1f3b88;">Paste</div>
<svg class="a" style="left:25px;top:109px" width="7" height="4" viewBox="0 0 7 4"><path d="M0 0h7l-3.5 3.5z" fill="#3d5e9c"/></svg>
<svg class="a" style="left:55px;top:58px" width="11" height="14" viewBox="0 0 11 14"><path d="M3 0 L7 9 M8 0 L4 9" stroke="#9aa3b0" stroke-width="1.3"/><circle cx="3" cy="11" r="2.2" fill="none" stroke="#9aa3b0" stroke-width="1.3"/><circle cx="8" cy="11" r="2.2" fill="none" stroke="#9aa3b0" stroke-width="1.3"/></svg>
<div class="t" style="left:72px;top:59.8px;font-size:11.3px;line-height:12px;color:#a1a6ad;">Cut</div>
<svg class="a" style="left:54px;top:80px" width="15" height="14" viewBox="0 0 15 14"><path d="M1 1h6l2 2v7h-8z" fill="#f4f6f9" stroke="#a7adb6"/><path d="M6 4h6l2 2v7h-8z" fill="#f4f6f9" stroke="#a7adb6"/><path d="M8 8h4M8 10h4" stroke="#c0c5cc"/></svg>
<div class="t" style="left:72px;top:81.8px;font-size:11.3px;line-height:12px;color:#a1a6ad;">Copy</div>
<svg class="a" style="left:53px;top:101px" width="16" height="16" viewBox="0 0 16 16"><path d="M1 10 L6 6 L10 10 L6 15z" fill="#e8d06a" stroke="#8a7a30"/><path d="M7 7 L13 1.5 L15 3.5 L9 9z" fill="#5a4aa0" stroke="#3a2d70"/></svg>
<div class="t" style="left:72px;top:102.8px;font-size:11.3px;line-height:12px;color:#1f3b88;">Format Painter</div>
<div class="a" style="left:163px;top:62px;width:134px;height:22px;border:1px solid #abc1de;background:#eef3fa"></div>
<div class="t" style="left:167px;top:68.3px;font-size:11.3px;line-height:12px;color:#40184f;">Times New Roman</div>
<svg class="a" style="left:287px;top:71px" width="7" height="4" viewBox="0 0 7 4"><path d="M0 0h7l-3.5 3.5z" fill="#3d5e9c"/></svg>
<div class="a" style="left:298px;top:62px;width:42px;height:22px;border:1px solid #abc1de;background:#eef3fa"></div>
<div class="t" style="left:302px;top:68.3px;font-size:11.3px;line-height:12px;color:#40184f;">11</div>
<svg class="a" style="left:330px;top:71px" width="7" height="4" viewBox="0 0 7 4"><path d="M0 0h7l-3.5 3.5z" fill="#3d5e9c"/></svg>
<div class="btnbox" style="left:344px;top:62px;width:44px;height:22px"></div>
<div class="t" style="left:349px;top:64px;font-family:'Liberation Serif',serif;font-size:15px;font-weight:bold;color:#222">A</div><div class="t" style="left:371px;top:68px;font-family:'Liberation Serif',serif;font-size:11px;font-weight:bold;color:#222">A</div>
<svg class="a" style="left:360px;top:65px" width="5" height="3"><path d="M0 3h5l-2.5-3z" fill="#3d5e9c"/></svg><svg class="a" style="left:381px;top:66px" width="5" height="3"><path d="M0 0h5l-2.5 3z" fill="#3d5e9c"/></svg>
<div class="btnbox" style="left:392px;top:62px;width:24px;height:22px"></div>
<svg class="a" style="left:395px;top:64px" width="18" height="18" viewBox="0 0 18 18"><rect x="1" y="1" width="10" height="8" fill="#fff" stroke="#7a8699"/><text x="3" y="8" font-size="6" font-family="Liberation Sans" fill="#333">Aa</text><path d="M7 15 L13 8 L16 11 L10 17z" fill="#fff" stroke="#7a8699"/></svg>
<div class="btnbox" style="left:163px;top:92px;width:182px;height:21px"></div>
<div class="a" style="left:185px;top:93px;width:1px;height:19px;background:#b7cbe5"></div>
<div class="a" style="left:209px;top:93px;width:1px;height:19px;background:#b7cbe5"></div>
<div class="a" style="left:243px;top:93px;width:1px;height:19px;background:#b7cbe5"></div>
<div class="a" style="left:268px;top:93px;width:1px;height:19px;background:#b7cbe5"></div>
<div class="a" style="left:292px;top:93px;width:1px;height:19px;background:#b7cbe5"></div>
<div class="a" style="left:316px;top:93px;width:1px;height:19px;background:#b7cbe5"></div>
<div class="t" style="left:168px;top:94px;font-family:'Liberation Serif',serif;font-size:14px;font-weight:bold;color:#111">B</div>
<div class="t" style="left:193px;top:94px;font-family:'Liberation Serif',serif;font-size:14px;font-style:italic;color:#111">I</div>
<div class="t" style="left:215px;top:94px;font-family:'Liberation Serif',serif;font-size:14px;color:#111;text-decoration:underline">U</div>
<svg class="a" style="left:234px;top:101px" width="6" height="4"><path d="M0 0h6l-3 3z" fill="#3d5e9c"/></svg>
<div class="t" style="left:246px;top:95px;font-family:'Liberation Serif',serif;font-size:12px;color:#333;text-decoration:line-through">abe</div>
<div class="t" style="left:272px;top:94px;font-size:13px;font-weight:bold;color:#111">x<sub style="font-size:7px;color:#c96">2</sub></div>
<div class="t" style="left:296px;top:94px;font-size:13px;font-weight:bold;color:#111">x<sup style="font-size:7px;color:#c96">2</sup></div>
<div class="t" style="left:319px;top:94px;font-family:'Liberation Serif',serif;font-size:14px;font-weight:bold;color:#111">Aa</div>
<svg class="a" style="left:338px;top:101px" width="6" height="4"><path d="M0 0h6l-3 3z" fill="#3d5e9c"/></svg>
<div class="btnbox" style="left:350px;top:92px;width:66px;height:21px"></div>
<div class="a" style="left:382px;top:93px;width:1px;height:19px;background:#b7cbe5"></div>
<svg class="a" style="left:353px;top:93px" width="18" height="18" viewBox="0 0 18 18"><rect x="0" y="1" width="9" height="8" fill="#ffff00"/><text x="0.5" y="8" font-size="8" font-family="Liberation Sans" fill="#222">ab</text><path d="M8 11 L14 3 L17 5 L11 13z" fill="#fff" stroke="#6d7a90"/><rect x="1" y="14" width="15" height="3" fill="#fff" stroke="#888"/></svg>
<svg class="a" style="left:373px;top:99px" width="6" height="4"><path d="M0 0h6l-3 3z" fill="#3d5e9c"/></svg>
<div class="t" style="left:387px;top:92px;font-family:'Liberation Serif',serif;font-size:15px;color:#3040a0">A</div><div class="a" style="left:386px;top:107px;width:14px;height:4px;background:#e8141c"></div>
<svg class="a" style="left:407px;top:99px" width="6" height="4"><path d="M0 0h6l-3 3z" fill="#3d5e9c"/></svg>
<div class="btnbox" style="left:427px;top:62px;width:99px;height:22px"></div>
<div class="a" style="left:461px;top:63px;width:23px;height:20px;background:linear-gradient(#ffd98a,#ffbf52 50%,#ffab3a 51%,#ffd070)"></div>
<svg class="a" style="left:432px;top:66px" width="14" height="14" viewBox="0 0 14 14"><g fill="#2a3f8a"><circle cx="1.5" cy="2" r="1.3"/><circle cx="1.5" cy="7" r="1.3"/><circle cx="1.5" cy="12" r="1.3"/></g><g fill="#111" shape-rendering="crispEdges"><rect x="5" y="1" width="9" height="2"/><rect x="5" y="6" width="9" height="2"/><rect x="5" y="11" width="9" height="2"/></g></svg>
<svg class="a" style="left:451px;top:72px" width="6" height="4"><path d="M0 0h6l-3 3z" fill="#3d5e9c"/></svg>
<svg class="a" style="left:465px;top:66px" width="16" height="14" viewBox="0 0 16 14"><text x="0" y="5" font-size="5" fill="#2a4aa0" font-family="Liberation Sans">1</text><text x="0" y="10" font-size="5" fill="#2a4aa0" font-family="Liberation Sans">2</text><text x="0" y="14" font-size="5" fill="#2a4aa0" font-family="Liberation Sans">3</text><g fill="#111" shape-rendering="crispEdges"><rect x="6" y="1" width="9" height="2"/><rect x="6" y="6" width="9" height="2"/><rect x="6" y="11" width="9" height="2"/></g></svg>
<svg class="a" style="left:487px;top:72px" width="6" height="4"><path d="M0 0h6l-3 3z" fill="#3d5e9c"/></svg>
<svg class="a" style="left:499px;top:66px" width="16" height="14" viewBox="0 0 16 14"><path d="M3 2h10M6 7h8M9 12h6" stroke="#111" stroke-width="1.1"/><g fill="#2a4aa0"><rect x="0" y="1" width="2" height="2"/><rect x="3" y="6" width="2" height="2"/><rect x="6" y="11" width="2" height="2"/></g></svg>
<svg class="a" style="left:517px;top:72px" width="6" height="4"><path d="M0 0h6l-3 3z" fill="#3d5e9c"/></svg>
<div class="btnbox" style="left:529px;top:62px;width:44px;height:22px"></div><div class="a" style="left:551px;top:63px;width:1px;height:20px;background:#b7cbe5"></div>
<svg class="a" style="left:533px;top:66px" width="16" height="14" viewBox="0 0 16 14"><g fill="#111" shape-rendering="crispEdges"><rect x="7" y="1" width="9" height="2"/><rect x="7" y="5" width="6" height="2"/><rect x="7" y="9" width="9" height="2"/><rect x="7" y="12" width="6" height="1"/></g><path d="M0 7 L5 4 V10z" fill="#3a6ad0"/></svg>
<svg class="a" style="left:555px;top:66px" width="16" height="14" viewBox="0 0 16 14"><g fill="#111" shape-rendering="crispEdges"><rect x="7" y="1" width="9" height="2"/><rect x="7" y="5" width="6" height="2"/><rect x="7" y="9" width="9" height="2"/><rect x="7" y="12" width="6" height="1"/></g><path d="M5 7 L0 4 V10z" fill="#3a6ad0"/></svg>
<div class="btnbox" style="left:577px;top:62px;width:24px;height:22px"></div>
<svg class="a" style="left:581px;top:64px" width="16" height="18" viewBox="0 0 16 18"><text x="0" y="8" font-size="8" font-family="Liberation Serif" fill="#2a4aa0">A</text><text x="0" y="17" font-size="8" font-family="Liberation Serif" fill="#c0302a">Z</text><path d="M11 1 V15" stroke="#111" stroke-width="1.3"/><path d="M8 12 L11 17 L14 12z" fill="#111"/></svg>
<div class="btnbox" style="left:604px;top:62px;width:24px;height:22px"></div>
<div class="t" style="left:610px;top:64px;font-family:'Liberation Serif',serif;font-size:15px;font-weight:bold;color:#111">&#182;</div>
<div class="btnbox" style="left:427px;top:92px;width:93px;height:21px"></div>
<div class="a" style="left:428px;top:93px;width:22px;height:19px;background:linear-gradient(#ffd98a,#ffbf52 50%,#ffab3a 51%,#ffd070)"></div>
<svg class="a" style="left:431px;top:92px" width="15" height="19"><g fill="#111"><rect x="0" y="4.5" width="14" height="1.4"/><rect x="0" y="7.1" width="10" height="1.4"/><rect x="0" y="9.7" width="14" height="1.4"/><rect x="0" y="12.3" width="10" height="1.4"/><rect x="0" y="14.9" width="14" height="1.4"/></g></svg>
<div class="a" style="left:450px;top:93px;width:1px;height:19px;background:#b7cbe5"></div>
<svg class="a" style="left:454px;top:92px" width="15" height="19"><g fill="#111"><rect x="0" y="4.5" width="14" height="1.4"/><rect x="2" y="7.1" width="10" height="1.4"/><rect x="0" y="9.7" width="14" height="1.4"/><rect x="2" y="12.3" width="10" height="1.4"/><rect x="0" y="14.9" width="14" height="1.4"/></g></svg>
<div class="a" style="left:473px;top:93px;width:1px;height:19px;background:#b7cbe5"></div>
<svg class="a" style="left:477px;top:92px" width="15" height="19"><g fill="#111"><rect x="0" y="4.5" width="14" height="1.4"/><rect x="4" y="7.1" width="10" height="1.4"/><rect x="0" y="9.7" width="14" height="1.4"/><rect x="4" y="12.3" width="10" height="1.4"/><rect x="0" y="14.9" width="14" height="1.4"/></g></svg>
<div class="a" style="left:496px;top:93px;width:1px;height:19px;background:#b7cbe5"></div>
<svg class="a" style="left:500px;top:92px" width="15" height="19"><g fill="#111"><rect x="0" y="4.5" width="14" height="1.4"/><rect x="0" y="7.1" width="14" height="1.4"/><rect x="0" y="9.7" width="14" height="1.4"/><rect x="0" y="12.3" width="14" height="1.4"/><rect x="0" y="14.9" width="14" height="1.4"/></g></svg>
<div class="btnbox" style="left:523px;top:92px;width:32px;height:21px"></div>
<svg class="a" style="left:527px;top:95px" width="18" height="16" viewBox="0 0 18 16"><path d="M3 2 V14" stroke="#3a6ad0" stroke-width="1.2"/><path d="M0 4 L3 0 L6 4z M0 12 L3 16 L6 12z" fill="#3a6ad0"/><g fill="#111" shape-rendering="crispEdges"><rect x="8" y="2" width="9" height="2"/><rect x="8" y="6" width="9" height="2"/><rect x="8" y="10" width="9" height="2"/></g></svg>
<svg class="a" style="left:546px;top:101px" width="6" height="4"><path d="M0 0h6l-3 3z" fill="#3d5e9c"/></svg>
<div class="btnbox" style="left:558px;top:92px;width:67px;height:21px"></div><div class="a" style="left:591px;top:93px;width:1px;height:19px;background:#b7cbe5"></div>
<svg class="a" style="left:562px;top:93px" width="18" height="18" viewBox="0 0 18 18"><path d="M3 8 L9 2 L15 8 L9 13z" fill="#fff" stroke="#555"/><path d="M9 2 V8" stroke="#555"/><rect x="2" y="14" width="15" height="3" fill="#fff" stroke="#888"/></svg>
<svg class="a" style="left:583px;top:101px" width="6" height="4"><path d="M0 0h6l-3 3z" fill="#3d5e9c"/></svg>
<svg class="a" style="left:596px;top:95px" width="15" height="15" viewBox="0 0 15 15"><rect x="0.5" y="0.5" width="14" height="13" fill="none" stroke="#999" stroke-dasharray="1 1"/><path d="M7.5 0 V14 M0 7 H15" stroke="#999" stroke-dasharray="1 1"/><path d="M0 14.5 H15" stroke="#111"/></svg>
<svg class="a" style="left:615px;top:101px" width="6" height="4"><path d="M0 0h6l-3 3z" fill="#3d5e9c"/></svg>
<div class="a" style="left:641px;top:57px;width:1096px;height:60px;border:1px solid #b3cbe8;background:#dae7f7"></div>
<div class="stb" style="left:645px"><div class="s1" style="font-family:Liberation Sans;color:#000;font-size:12.5px">AaBbCcDc</div><div class="s2">&#182; Normal</div></div>
<div class="stb" style="left:717px"><div class="s1" style="font-family:Liberation Sans;color:#000;font-size:12.5px">AaBbCcDc</div><div class="s2">&#182; No Spaci...</div></div>
<div class="stb" style="left:789px"><div class="s1" style="font-family:Liberation Serif;font-weight:bold;color:#2f5b9a;font-size:17px;top:9px">AaBbC(</div><div class="s2">Heading 1</div></div>
<div class="stb" style="left:861px"><div class="s1" style="font-family:Liberation Serif;font-weight:bold;color:#4f81bd;font-size:15px">AaBbCc</div><div class="s2">Heading 2</div></div>
<div class="stb" style="left:933px"><div class="s1" style="font-family:Liberation Serif;color:#17365d;font-size:30px;top:-2px;line-height:30px">AaB</div><div class="s2">Title</div></div>
<div class="stb" style="left:1005px"><div class="s1" style="font-family:Liberation Serif;font-style:italic;color:#4f81bd;font-size:14px;letter-spacing:1px">AaBbCc.</div><div class="s2">Subtitle</div></div>
<div class="stb" style="left:1077px"><div class="s1" style="font-family:Liberation Sans;font-style:italic;color:#808080;font-size:12.5px">AaBbCcDc</div><div class="s2">Subtle Em...</div></div>
<div class="stb" style="left:1149px"><div class="s1" style="font-family:Liberation Sans;font-style:italic;color:#000;font-size:12.5px">AaBbCcDc</div><div class="s2">Emphasis</div></div>
<div class="stb" style="left:1221px"><div class="s1" style="font-family:Liberation Sans;font-style:italic;font-weight:bold;color:#4f81bd;font-size:12.5px">AaBbCcDc</div><div class="s2">Intense E...</div></div>
<div class="stb" style="left:1293px"><div class="s1" style="font-family:Liberation Sans;font-weight:bold;color:#000;font-size:12.5px">AaBbCcDc</div><div class="s2">Strong</div></div>
<div class="stb" style="left:1365px"><div class="s1" style="font-family:Liberation Sans;font-style:italic;color:#000;font-size:12.5px">AaBbCcDc</div><div class="s2">Quote</div></div>
<div class="stb" style="left:1437px"><div class="s1" style="font-family:Liberation Sans;font-style:italic;font-weight:bold;color:#4f81bd;font-size:12.5px"><u>AaBbCcDc</u></div><div class="s2">Intense Q...</div></div>
<div class="stb" style="left:1509px"><div class="s1" style="font-family:Liberation Sans;color:#c0504d;font-size:12px;top:11px"><u>AABBCCDD</u></div><div class="s2">Subtle Ref...</div></div>
<div class="stb" style="left:1581px"><div class="s1" style="font-family:Liberation Sans;font-weight:bold;color:#c0504d;font-size:12px;top:11px"><u>AABBCCDD</u></div><div class="s2">Intense R...</div></div>
<div class="stb" style="left:1653px"><div class="s1" style="font-family:Liberation Sans;font-weight:bold;color:#000;font-size:12px;top:11px">AABBCCDD</div><div class="s2">Book Title</div></div>
<div class="a" style="left:641px;top:59px;width:72px;height:56px;border:2px solid #f5b54a;border-radius:2px;box-shadow:inset 0 0 0 1px #ffe3a0"></div>
<div class="a" style="left:1723px;top:58px;width:13px;height:19px;border:1px solid #b3cbe8;background:linear-gradient(#eef4fb,#d3e2f5)"></div>
<div class="a" style="left:1723px;top:78px;width:13px;height:19px;border:1px solid #b3cbe8;background:linear-gradient(#eef4fb,#d3e2f5)"></div>
<div class="a" style="left:1723px;top:98px;width:13px;height:19px;border:1px solid #b3cbe8;background:linear-gradient(#eef4fb,#d3e2f5)"></div>
<svg class="a" style="left:1726px;top:66px" width="7" height="4"><path d="M0 4h7l-3.5-3.5z" fill="#b0bfd4"/></svg>
<svg class="a" style="left:1726px;top:86px" width="7" height="4"><path d="M0 0h7l-3.5 3.5z" fill="#4a6aa8"/></svg>
<svg class="a" style="left:1726px;top:104px" width="7" height="6"><path d="M0 0h7" stroke="#4a6aa8"/><path d="M0 2h7l-3.5 3.5z" fill="#4a6aa8"/></svg>
<div class="t" style="left:1745px;top:52px;font-family:'Liberation Serif',serif;font-size:30px;color:#b04fc0;line-height:32px">A</div><div class="t" style="left:1755px;top:56px;font-family:'Liberation Serif',serif;font-size:30px;color:#4f7fc8;line-height:32px;opacity:.9">A</div>
<div class="t" style="left:1743px;top:93.3px;font-size:11.3px;line-height:12px;color:#1f3b88;">Change</div>
<div class="t" style="left:1747px;top:105.3px;font-size:11.3px;line-height:12px;color:#1f3b88;">Styles</div>
<svg class="a" style="left:1778px;top:110px" width="6" height="4"><path d="M0 0h6l-3 3z" fill="#3d5e9c"/></svg>
<svg class="a" style="left:1799px;top:57px" width="17" height="14" viewBox="0 0 17 14"><rect x="1" y="5" width="6" height="8" rx="1" fill="#cfd8e6" stroke="#2b3f78"/><rect x="10" y="5" width="6" height="8" rx="1" fill="#cfd8e6" stroke="#2b3f78"/><rect x="6" y="6" width="5" height="3" fill="#2b3f78"/><rect x="2" y="1" width="4" height="5" fill="#2b3f78"/><rect x="11" y="1" width="4" height="5" fill="#2b3f78"/></svg>
<div class="t" style="left:1818px;top:59.8px;font-size:11.3px;line-height:12px;color:#1f3b88;">Find</div>
<svg class="a" style="left:1844px;top:64px" width="6" height="4"><path d="M0 0h6l-3 3z" fill="#3d5e9c"/></svg>
<div class="t" style="left:1799px;top:79px;font-size:9px;color:#555;line-height:9px">ab</div><div class="t" style="left:1805px;top:86px;font-size:9px;font-weight:bold;color:#2a8a2a;line-height:9px">ac</div>
<div class="t" style="left:1818px;top:81.8px;font-size:11.3px;line-height:12px;color:#1f3b88;">Replace</div>
<svg class="a" style="left:1801px;top:101px" width="12" height="16" viewBox="0 0 12 16"><path d="M1 1 V13 L4 10 L7 15 L9 14 L6 9 H10z" fill="#fff" stroke="#333"/></svg>
<div class="t" style="left:1818px;top:102.8px;font-size:11.3px;line-height:12px;color:#1f3b88;">Select</div>
<svg class="a" style="left:1850px;top:107px" width="6" height="4"><path d="M0 0h6l-3 3z" fill="#3d5e9c"/></svg>
<div class="a" style="left:0;top:140px;width:1904px;height:26px;background:#9cbae2;border-top:1px solid #a5b6ce"></div>
<div class="a" style="left:1px;top:142px;width:24px;height:23px;border:1px solid #5b82c3;background:#a9c3e8"></div>
<div class="a" style="left:5px;top:146px;width:15px;height:15px;border:1px solid #5b82c3;background:linear-gradient(#fff,#dde8f6)"></div>
<div class="a" style="left:10px;top:151px;width:2px;height:6px;background:#15305e"></div><div class="a" style="left:10px;top:155px;width:6px;height:2px;background:#15305e"></div>
<div class="a" style="left:138px;top:147px;width:818px;height:13px;background:#b8cfee;border:1px solid #c9dbf3"></div>
<div class="a" style="left:236px;top:148px;width:623px;height:11px;background:#fff"></div>
<div class="t" style="left:136.8px;top:148px;font-size:10px;line-height:12px;color:#333">1</div><div class="a" style="left:151.8px;top:153px;width:1px;height:1px;background:#555"></div><div class="a" style="left:163.8px;top:153px;width:1px;height:1px;background:#555"></div><div class="a" style="left:175.7px;top:153px;width:1px;height:1px;background:#555"></div><div class="a" style="left:187.7px;top:151px;width:1px;height:5px;background:#555"></div><div class="a" style="left:199.7px;top:153px;width:1px;height:1px;background:#555"></div><div class="a" style="left:211.7px;top:153px;width:1px;height:1px;background:#555"></div><div class="a" style="left:223.6px;top:153px;width:1px;height:1px;background:#555"></div><div class="a" style="left:247.6px;top:153px;width:1px;height:1px;background:#555"></div><div class="a" style="left:259.6px;top:153px;width:1px;height:1px;background:#555"></div><div class="a" style="left:271.5px;top:153px;width:1px;height:1px;background:#555"></div><div class="a" style="left:283.5px;top:151px;width:1px;height:5px;background:#555"></div><div class="a" style="left:295.5px;top:153px;width:1px;height:1px;background:#555"></div><div class="a" style="left:307.4px;top:153px;width:1px;height:1px;background:#555"></div><div class="a" style="left:319.4px;top:153px;width:1px;height:1px;background:#555"></div><div class="t" style="left:328.4px;top:148px;font-size:10px;line-height:12px;color:#333">1</div><div class="a" style="left:343.4px;top:153px;width:1px;height:1px;background:#555"></div><div class="a" style="left:355.4px;top:153px;width:1px;height:1px;background:#555"></div><div class="a" style="left:367.3px;top:153px;width:1px;height:1px;background:#555"></div><div class="a" style="left:379.3px;top:151px;width:1px;height:5px;background:#555"></div><div class="a" style="left:391.3px;top:153px;width:1px;height:1px;background:#555"></div><div class="a" style="left:403.2px;top:153px;width:1px;height:1px;background:#555"></div><div class="a" style="left:415.2px;top:153px;width:1px;height:1px;background:#555"></div><div class="t" style="left:424.2px;top:148px;font-size:10px;line-height:12px;color:#333">2</div><div class="a" style="left:439.2px;top:153px;width:1px;height:1px;background:#555"></div><div class="a" style="left:451.1px;top:153px;width:1px;height:1px;background:#555"></div><div class="a" style="left:463.1px;top:153px;width:1px;height:1px;background:#555"></div><div class="a" style="left:475.1px;top:151px;width:1px;height:5px;background:#555"></div><div class="a" style="left:487.1px;top:153px;width:1px;height:1px;background:#555"></div><div class="a" style="left:499.0px;top:153px;width:1px;height:1px;background:#555"></div><div class="a" style="left:511.0px;top:153px;width:1px;height:1px;background:#555"></div><div class="t" style="left:520.0px;top:148px;font-size:10px;line-height:12px;color:#333">3</div><div class="a" style="left:535.0px;top:153px;width:1px;height:1px;background:#555"></div><div class="a" style="left:546.9px;top:153px;width:1px;height:1px;background:#555"></div><div class="a" style="left:558.9px;top:153px;width:1px;height:1px;background:#555"></div><div class="a" style="left:570.9px;top:151px;width:1px;height:5px;background:#555"></div><div class="a" style="left:582.9px;top:153px;width:1px;height:1px;background:#555"></div><div class="a" style="left:594.9px;top:153px;width:1px;height:1px;background:#555"></div><div class="a" style="left:606.8px;top:153px;width:1px;height:1px;background:#555"></div><div class="t" style="left:615.8px;top:148px;font-size:10px;line-height:12px;color:#333">4</div><div class="a" style="left:630.8px;top:153px;width:1px;height:1px;background:#555"></div><div class="a" style="left:642.8px;top:153px;width:1px;height:1px;background:#555"></div><div class="a" style="left:654.7px;top:153px;width:1px;height:1px;background:#555"></div><div class="a" style="left:666.7px;top:151px;width:1px;height:5px;background:#555"></div><div class="a" style="left:678.7px;top:153px;width:1px;height:1px;background:#555"></div><div class="a" style="left:690.6px;top:153px;width:1px;height:1px;background:#555"></div><div class="a" style="left:702.6px;top:153px;width:1px;height:1px;background:#555"></div><div class="t" style="left:711.6px;top:148px;font-size:10px;line-height:12px;color:#333">5</div><div class="a" style="left:726.6px;top:153px;width:1px;height:1px;background:#555"></div><div class="a" style="left:738.5px;top:153px;width:1px;height:1px;background:#555"></div><div class="a" style="left:750.5px;top:153px;width:1px;height:1px;background:#555"></div><div class="a" style="left:762.5px;top:151px;width:1px;height:5px;background:#555"></div><div class="a" style="left:774.5px;top:153px;width:1px;height:1px;background:#555"></div><div class="a" style="left:786.5px;top:153px;width:1px;height:1px;background:#555"></div><div class="a" style="left:798.4px;top:153px;width:1px;height:1px;background:#555"></div><div class="t" style="left:807.4px;top:148px;font-size:10px;line-height:12px;color:#333">6</div><div class="a" style="left:822.4px;top:153px;width:1px;height:1px;background:#555"></div><div class="a" style="left:834.4px;top:153px;width:1px;height:1px;background:#555"></div><div class="a" style="left:846.3px;top:153px;width:1px;height:1px;background:#555"></div><div class="a" style="left:858.3px;top:151px;width:1px;height:5px;background:#555"></div><div class="a" style="left:870.3px;top:153px;width:1px;height:1px;background:#555"></div><div class="a" style="left:882.2px;top:153px;width:1px;height:1px;background:#555"></div><div class="a" style="left:894.2px;top:153px;width:1px;height:1px;background:#555"></div><div class="t" style="left:903.2px;top:148px;font-size:10px;line-height:12px;color:#333">7</div><div class="a" style="left:918.2px;top:153px;width:1px;height:1px;background:#555"></div><div class="a" style="left:283.5px;top:161px;width:1px;height:3px;background:#6e87ad"></div><div class="a" style="left:331.4px;top:161px;width:1px;height:3px;background:#6e87ad"></div><div class="a" style="left:379.3px;top:161px;width:1px;height:3px;background:#6e87ad"></div><div class="a" style="left:427.2px;top:161px;width:1px;height:3px;background:#6e87ad"></div><div class="a" style="left:475.1px;top:161px;width:1px;height:3px;background:#6e87ad"></div><div class="a" style="left:523.0px;top:161px;width:1px;height:3px;background:#6e87ad"></div><div class="a" style="left:570.9px;top:161px;width:1px;height:3px;background:#6e87ad"></div><div class="a" style="left:618.8px;top:161px;width:1px;height:3px;background:#6e87ad"></div><div class="a" style="left:666.7px;top:161px;width:1px;height:3px;background:#6e87ad"></div><div class="a" style="left:714.6px;top:161px;width:1px;height:3px;background:#6e87ad"></div><div class="a" style="left:762.5px;top:161px;width:1px;height:3px;background:#6e87ad"></div><div class="a" style="left:810.4px;top:161px;width:1px;height:3px;background:#6e87ad"></div><div class="a" style="left:858.3px;top:161px;width:1px;height:3px;background:#6e87ad"></div>
<svg class="a" style="left:242px;top:142px" width="11" height="9" viewBox="0 0 11 9"><path d="M0.5 0.5 H10.5 L5.5 7z" fill="#eef3fa" stroke="#6b84b0"/></svg>
<svg class="a" style="left:278px;top:151px" width="11" height="15" viewBox="0 0 11 15"><path d="M5.5 0.5 L10.5 6 V9 H0.5 V6z" fill="#eef3fa" stroke="#6b84b0"/><rect x="0.5" y="9" width="10" height="5.5" fill="#eef3fa" stroke="#6b84b0"/></svg>
<svg class="a" style="left:853px;top:151px" width="11" height="9" viewBox="0 0 11 9"><path d="M5.5 0.5 L10.5 6 V8.5 H0.5 V6z" fill="#eef3fa" stroke="#6b84b0"/></svg>
<div class="a" style="left:0;top:166px;width:1904px;height:891px;background:linear-gradient(#a4c1e8 0px,#9cbbe4 24px,#7699c6 324px,#5a80b4 624px,#5f89c0 760px,#6590ca 864px,#6792cc 891px)"></div>
<svg class="a" style="left:24px;top:166px" width="114" height="120" viewBox="0 0 114 120"><path d="M0 0 H114 V54 Q45 64 0 94z" fill="rgba(255,255,255,0.15)"/><path d="M0 117 Q60 75 160 45" stroke="rgba(255,255,255,0.3)" fill="none" stroke-width="1.3"/></svg>
<div class="a" style="left:0;top:166px;width:24px;height:891px;background:#9fbbe4"></div>
<div class="a" style="left:5px;top:1044px;width:14px;height:13px;background:#fff;border:1px solid #c5d6ee"></div>
<div class="page" style="left:138px;top:169px;width:818px;height:874px;box-shadow:4px 0 4px -1px rgba(40,60,100,.6)"></div>
<div class="a" style="left:138px;top:1041px;width:818px;height:2px;background:#000"></div>
<div class="page" style="left:138px;top:1043px;width:818px;height:30px;border-top:none"></div>
<div class="page" style="left:971px;top:169px;width:818px;height:872px;box-shadow:4px 4px 4px -1px rgba(40,60,100,.6)"></div>
<div class="page" style="left:971px;top:1049px;width:818px;height:30px;box-shadow:4px 0 4px -1px rgba(40,60,100,.6)"></div>
<div class="ln" style="left:0;width:1093px;text-align:center;top:192.25px;font-weight:bold;font-size:14.67px">Health Questionnaire</div>
<div class="ln" style="left:259px;top:224.85px;">1.</div>
<div class="ln" style="left:295.3px;top:224.85px;">How would you rate your chance of developing cancer in the future (7 point scale; <i>Very low</i> –</div>
<div class="ln" style="left:295.3px;top:241.72px;"><i>very high</i>)?</div>
<div class="ln" style="left:259px;top:258.59px;">2.</div>
<div class="ln" style="left:295.3px;top:258.59px;">On a scale from 0% to 100%, how would you rate the probability that you will develop cancer</div>
<div class="ln" style="left:295.3px;top:275.46px;">in the future?</div>
<div class="ln" style="left:259px;top:292.33px;">3.</div>
<div class="ln" style="left:295.3px;top:292.33px;">The way I look after my health means that my odds of getting cancer in the future are (7 point</div>
<div class="ln" style="left:295.3px;top:309.20px;">scale; <i>very low – very high</i>)</div>
<div class="ln" style="left:259px;top:326.07px;">4.</div>
<div class="ln" style="left:295.3px;top:326.07px;">When I think carefully about my lifestyle, it does seem possible that I could get cancer</div>
<div class="ln" style="left:295.3px;top:342.94px;">(<i>strongly disagree-strongly agree</i>)</div>
<div class="ln" style="left:259px;top:359.81px;">5.</div>
<div class="ln" style="left:295.3px;top:359.81px;">If I look at myself as if I was a doctor, I realize that my behavior puts me at risk of getting</div>
<div class="ln" style="left:295.3px;top:376.68px;">cancer. (<i>strongly disagree-strongly agree</i>)</div>
<div class="ln" style="left:259px;top:393.55px;">6.</div>
<div class="ln" style="left:295.3px;top:393.55px;">How do you think your chance of developing cancer in the future compares to the average</div>
<div class="ln" style="left:295.3px;top:410.42px;">person of your gender and your age (7 point scale; <i>Much lower – much higher</i>)?</div>
<div class="ln" style="left:259px;top:427.29px;">7.</div>
<div class="ln" style="left:295.3px;top:427.29px;">How worried are you about developing cancer in the future (7 point scale; <i>not at all</i> –</div>
<div class="ln" style="left:295.3px;top:444.16px;"><i>extremely</i>)?</div>
<div class="ln" style="left:259px;top:461.03px;">8.</div>
<div class="ln" style="left:295.3px;top:461.03px;">How fearful are you about developing cancer in your lifetime (7 point scale; <i>not at all</i> –</div>
<div class="ln" style="left:295.3px;top:477.90px;"><i>extremely</i>)?</div>
<div class="ln" style="left:259px;top:494.77px;">9.</div>
<div class="ln" style="left:295.3px;top:494.77px;">How anxious are you about developing cancer in your lifetime (7 point scale; <i>not at all</i> –</div>
<div class="ln" style="left:295.3px;top:511.64px;"><i>extremely</i>)?</div>
<div class="ln" style="left:259px;top:528.51px;">10.</div>
<div class="ln" style="left:295.3px;top:528.51px;">When you think about cancer for a moment, to what extent do you feel:</div>
<div class="ln" style="left:307px;top:545.38px;">a.</div>
<div class="ln" style="left:331px;top:545.38px;">Fearful (7 point scale; not at all – extremely)</div>
<div class="ln" style="left:307px;top:562.25px;">b.</div>
<div class="ln" style="left:331px;top:562.25px;">Angry (7 point scale; not at all – extremely)</div>
<div class="ln" style="left:307px;top:579.12px;">c.</div>
<div class="ln" style="left:331px;top:579.12px;">Upset (7 point scale; not at all – extremely)</div>
<div class="ln" style="left:307px;top:595.99px;">d.</div>
<div class="ln" style="left:331px;top:595.99px;">Worried (7 point scale; not at all – extremely)</div>
<div class="ln" style="left:307px;top:612.86px;">e.</div>
<div class="ln" style="left:331px;top:612.86px;">Anxious (7 point scale; not at all – extremely)</div>
<div class="ln" style="left:247px;top:629.73px;">11.</div>
<div class="ln" style="left:283px;top:629.73px;">How concerned are you about developing cancer in your lifetime (7 point scale; <i>not at all</i> –</div>
<div class="ln" style="left:283px;top:646.60px;"><i>extremely</i>)?</div>
<div class="ln" style="left:247px;top:663.47px;">12.</div>
<div class="ln" style="left:283px;top:663.47px;">I feel like I could easily develop cancer in the future <i>(</i>7 point scale; <i>I feel strongly this will not</i></div>
<div class="ln" style="left:283px;top:680.34px;"><i>happen – I feel strongly that this could easily happen</i>)</div>
<div class="ln" style="left:247px;top:697.21px;">13.</div>
<div class="ln" style="left:283px;top:697.21px;">How easy is it for you to imagine yourself developing cancer in the future? (7 point scale; <i>not at</i></div>
<div class="ln" style="left:283px;top:714.08px;"><i>all easy – extremely easy</i>)</div>
<div class="ln" style="left:247px;top:730.95px;">14.</div>
<div class="ln" style="left:283px;top:730.95px;">I feel very vulnerable to cancer (7 point scale; <i>strongly disagree – strongly agree</i>)</div>
<div class="ln" style="left:247px;top:747.82px;">15.</div>
<div class="ln" style="left:283px;top:747.82px;">My gut feeling is that I am going to get cancer sometime in the future. (7 point scale; <i>strongly</i></div>
<div class="ln" style="left:283px;top:764.69px;"><i>disagree – strongly agree</i>)</div>
<div class="ln" style="left:247px;top:781.56px;">16.</div>
<div class="ln" style="left:283px;top:781.56px;">I’m confident that I won’t get cancer. (7 point scale; <i>strongly disagree – strongly agree</i>)</div>
<div class="ln" style="left:247px;top:798.43px;">17.</div>
<div class="ln" style="left:283px;top:798.43px;">I would be lying if I said “There is no chance of me getting cancer” (7 point scale; <i>strongly</i></div>
<div class="ln" style="left:283px;top:815.30px;"><i>disagree-strongly agree</i>)</div>
<div class="ln" style="left:247px;top:832.17px;">18.</div>
<div class="ln" style="left:283px;top:832.17px;">My first reaction when I hear of someone getting cancer is “that could be me someday” (7 point</div>
<div class="ln" style="left:283px;top:849.04px;">scale; <i>strongly disagree-strongly agree</i>)</div>
<div class="ln" style="left:247px;top:865.91px;">19.</div>
<div class="ln" style="left:283px;top:865.91px;">How optimistic are you that you will avoid getting cancer in the future (7 point scale; <i>extremely</i></div>
<div class="ln" style="left:283px;top:882.78px;"><i>pessimistic – extremely optimistic</i>)</div>
<div class="ln" style="left:235.6px;top:916.52px;">Information avoidance</div>
<div class="ln" style="left:247px;top:933.39px;">20.</div>
<div class="ln" style="left:283px;top:933.39px;">If I had cancer, I wouldn’t want to know. (7 point scale; <i>strongly disagree – strongly agree</i>)</div>
<div class="ln" style="left:247px;top:950.26px;">21.</div>
<div class="ln" style="left:283px;top:950.26px;">It would be better not to know whether I had cancer. (7 point scale; <i>strongly disagree – strongly</i></div>
<div class="ln" style="left:283px;top:967.13px;"><i>agree</i>)</div>
<div class="ln" style="left:235.6px;top:1000.87px;">Health Orientation Scale (7 point scale; <i>strongly disagree – strongly agree</i>)</div>
<div class="ln" style="left:247px;top:1017.74px;">22.</div>
<div class="ln" style="left:283px;top:1017.74px;">I frequently imagine how I can achieve a state of “ideal health.”</div>
<div class="ln" style="left:1080.5px;top:174.65px;">23.</div>
<div class="ln" style="left:1116.3px;top:174.65px;">I think of good health as a key to a happy life.</div>
<div class="ln" style="left:1080.5px;top:191.51px;">24.</div>
<div class="ln" style="left:1116.3px;top:191.51px;">Doing healthy things gives me a sense of accomplishment.</div>
<div class="ln" style="left:1080.5px;top:208.37px;">25.</div>
<div class="ln" style="left:1116.3px;top:208.37px;">When I engage in healthy behaviors, I am pleased with myself.</div>
<div class="ln" style="left:1080.5px;top:225.23px;">26.</div>
<div class="ln" style="left:1116.3px;top:225.23px;">I would do anything to maintain a good, healthy body.</div>
<div class="ln" style="left:1080.5px;top:242.09px;">27.</div>
<div class="ln" style="left:1116.3px;top:242.09px;">I admire people who do things that make them very healthy.</div>
<div class="ln" style="left:1080.5px;top:258.95px;">28.</div>
<div class="ln" style="left:1116.3px;top:258.95px;">I often worry that I am not doing the best I can to improve my health.</div>
<div class="ln" style="left:1080.5px;top:275.81px;">29.</div>
<div class="ln" style="left:1116.3px;top:275.81px;">I often imagine myself being ill in the future.</div>
<div class="ln" style="left:1080.5px;top:292.67px;">30.</div>
<div class="ln" style="left:1116.3px;top:292.67px;">I am anxious that I am not following through on my obligations and being as responsible as I</div>
<div class="ln" style="left:1116.3px;top:309.53px;">should about taking care of my health.</div>
<div class="ln" style="left:1080.5px;top:326.39px;">31.</div>
<div class="ln" style="left:1116.3px;top:326.39px;">When I see people who are very sick because they did not take care of their health, I get scared</div>
<div class="ln" style="left:1116.3px;top:343.25px;">thinking that could be me in the future.</div>
<div class="ln" style="left:1080.5px;top:360.11px;">32.</div>
<div class="ln" style="left:1116.3px;top:360.11px;">I often worry about not feeling as healthy as I used to be.</div>
<div class="ln" style="left:1080.5px;top:376.97px;">33.</div>
<div class="ln" style="left:1116.3px;top:376.97px;">Thinking about my health usually makes me worry.</div>
<div class="ln" style="left:1068.3px;top:410.69px;">Perceived Severity (7 point scale; <i>strongly disagree – strongly agree</i>&nbsp; except for item 44)</div>
<div class="ln" style="left:1080.5px;top:427.55px;">34.</div>
<div class="ln" style="left:1116.3px;top:427.55px;">Cancer would endanger my significant relationships.</div>
<div class="ln" style="left:1080.5px;top:444.41px;">35.</div>
<div class="ln" style="left:1116.3px;top:444.41px;">My financial security would be endangered if I got cancer.</div>
<div class="ln" style="left:1080.5px;top:461.27px;">36.</div>
<div class="ln" style="left:1116.3px;top:461.27px;">Problems I would experience from cancer would last a long time.</div>
<div class="ln" style="left:1080.5px;top:478.13px;">37.</div>
<div class="ln" style="left:1116.3px;top:478.13px;">When I think about cancer, I think about death.</div>
<div class="ln" style="left:1080.5px;top:494.99px;">38.</div>
<div class="ln" style="left:1116.3px;top:494.99px;">On a scale of 1 (not at all severe – no impact on length of life) to 100 (extremely severe – almost</div>
<div class="ln" style="left:1116.3px;top:511.85px;">certain to die quickly), how serious is cancer?</div>
<div class="ln" style="left:1068.3px;top:545.57px;">Need for affect/ cognition (5 point scale; <i>extremely uncharacteristic of me – extremely characteristic of</i></div>
<div class="ln" style="left:1068.3px;top:562.43px;"><i>me</i>)</div>
<div class="ln" style="left:1080.5px;top:579.29px;">39.</div>
<div class="ln" style="left:1116.3px;top:579.29px;">I wish I could feel less emotion.</div>
<div class="ln" style="left:1080.5px;top:596.15px;">40.</div>
<div class="ln" style="left:1116.3px;top:596.15px;">I prefer complex to simple problems.</div>
<div class="ln" style="left:1080.5px;top:613.01px;">41.</div>
<div class="ln" style="left:1116.3px;top:613.01px;">It is very important for me to be in touch with my feelings.</div>
<div class="ln" style="left:1080.5px;top:629.87px;">42.</div>
<div class="ln" style="left:1116.3px;top:629.87px;">I like the responsibility of handling a situation that requires a lot of thinking.</div>
<div class="ln" style="left:1080.5px;top:646.73px;">43.</div>
<div class="ln" style="left:1116.3px;top:646.73px;">I prefer life to be filled with puzzles I must solve.</div>
<div class="ln" style="left:1080.5px;top:663.59px;">44.</div>
<div class="ln" style="left:1116.3px;top:663.59px;">I find satisfaction in deliberating long and hard for hours.</div>
<div class="ln" style="left:1080.5px;top:680.45px;">45.</div>
<div class="ln" style="left:1116.3px;top:680.45px;">I am a very emotional person.</div>
<div class="ln" style="left:1080.5px;top:697.31px;">46.</div>
<div class="ln" style="left:1116.3px;top:697.31px;">I feel like I need a good cry every now and then.</div>
<div class="ln" style="left:1080.5px;top:714.17px;">47.</div>
<div class="ln" style="left:1116.3px;top:714.17px;">I find strong emotions overwhelming and therefore try to avoid them.</div>
<div class="ln" style="left:1080.5px;top:731.03px;">48.</div>
<div class="ln" style="left:1116.3px;top:731.03px;">I like tasks that require little thought once I’ve learned them.</div>
<div class="ln" style="left:1080.5px;top:747.89px;">49.</div>
<div class="ln" style="left:1116.3px;top:747.89px;">It is enough for me that something gets the job done. I don’t care how or why it works.</div>
<div class="ln" style="left:1080.5px;top:764.75px;">50.</div>
<div class="ln" style="left:1116.3px;top:764.75px;">Emotions are dangerous; they tend to get me into trouble.</div>
<div class="ln" style="left:1080.5px;top:781.61px;">51.</div>
<div class="ln" style="left:1116.3px;top:781.61px;">My initial impressions are almost always right.</div>
<div class="ln" style="left:1080.5px;top:798.47px;">52.</div>
<div class="ln" style="left:1116.3px;top:798.47px;">I trust my initial feelings about things.</div>
<div class="ln" style="left:1080.5px;top:815.33px;">53.</div>
<div class="ln" style="left:1116.3px;top:815.33px;">I can usually rely on my “gut feelings.”</div>
<div class="ln" style="left:1080.5px;top:832.19px;">54.</div>
<div class="ln" style="left:1116.3px;top:832.19px;">I believe in trusting my hunches.</div>
<div class="ln" style="left:1092px;top:849.05px;">55.</div>
<div class="ln" style="left:1116.3px;top:849.05px;">When I make a decision, I . . . (7 point scale; <i>strongly disagree – strongly agree</i>)</div>
<div class="ln" style="left:1140.2px;top:865.91px;">a.</div>
<div class="ln" style="left:1163.7px;top:865.91px;">analyze all available information in detail</div>
<div class="ln" style="left:1140.2px;top:882.77px;">b.</div>
<div class="ln" style="left:1163.7px;top:882.77px;">base the decision on my inner feelings and reactions</div>
<div class="ln" style="left:1140.2px;top:899.63px;">c.</div>
<div class="ln" style="left:1163.7px;top:899.63px;">consider all consequences of my decision</div>
<div class="ln" style="left:1140.2px;top:916.49px;">d.</div>
<div class="ln" style="left:1163.7px;top:916.49px;">consider all alternatives carefully</div>
<div class="ln" style="left:1140.2px;top:933.35px;">e.</div>
<div class="ln" style="left:1163.7px;top:933.35px;">rely on my instincts</div>
<div class="ln" style="left:1140.2px;top:950.21px;">f.</div>
<div class="ln" style="left:1163.7px;top:950.21px;">know what I will do before I start analyzing everything</div>
<div class="ln" style="left:1068.3px;top:983.93px;">Emotion regulation (7 point scale; <i>strongly disagree – strongly agree</i>)</div>
<div class="ln" style="left:1080.5px;top:1000.79px;">56.</div>
<div class="ln" style="left:1116.3px;top:1000.79px;">When I want to feel less negative emotion (such as sadness or anger), I change the way I’m</div>
<div class="ln" style="left:1116.3px;top:1017.65px;">thinking about the situation.</div>
<svg class="a" style="left:1439px;top:425px" width="80" height="3" viewBox="0 0 80 3"><path d="M0 0 L2 2 M2 2 L4 0 M4 0 L6 2 M6 2 L8 0 M8 0 L10 2 M10 2 L12 0 M12 0 L14 2 M14 2 L16 0 M16 0 L18 2 M18 2 L20 0 M20 0 L22 2 M22 2 L24 0 M24 0 L26 2 M26 2 L28 0 M28 0 L30 2 M30 2 L32 0 M32 0 L34 2 M34 2 L36 0 M36 0 L38 2 M38 2 L40 0 M40 0 L42 2 M42 2 L44 0 M44 0 L46 2 M46 2 L48 0 M48 0 L50 2 M50 2 L52 0 M52 0 L54 2 M54 2 L56 0 M56 0 L58 2 M58 2 L60 0 M60 0 L62 2 M62 2 L64 0 M64 0 L66 2 M66 2 L68 0 M68 0 L70 2 M70 2 L72 0 M72 0 L74 2 M74 2 L76 0 M76 0 L78 2 M78 2 L80 0 " stroke="#1f8f1f" stroke-width="1" fill="none"/></svg>
<div class="a" style="left:139px;top:1043px;width:816px;height:14px;overflow:hidden">
<div class="ln" style="left:108px;top:3.55px">57.</div><div class="ln" style="left:144px;top:3.55px">When I’m faced with a stressful situation, I make myself think about it in a way that helps me</div>
</div>
<div class="a" style="left:1904px;top:140px;width:16px;height:917px;background:linear-gradient(90deg,#a9c2e6,#c4d6ef)"></div>
<div class="a" style="left:1904px;top:166px;width:16px;height:891px;background:linear-gradient(#a7c2e8,#86a6d4 40%,#6f93c8 70%,#7aa0d2)"></div>
<div class="a" style="left:1908px;top:144px;width:9px;height:2px;background:#2c3e60"></div>
<div class="a" style="left:1905px;top:148px;width:14px;height:15px;background:#b9c4d4;border:1px solid #8fa0b8"></div>
<svg class="a" style="left:1906px;top:149px" width="12" height="13" viewBox="0 0 12 13"><rect x="3" y="1" width="5" height="4" fill="#fff" stroke="#243a6a"/><rect x="1" y="4" width="10" height="6" fill="#f1eef5" stroke="#243a6a"/><rect x="5" y="8" width="5" height="4" fill="#fff" stroke="#243a6a"/></svg>
<div class="a" style="left:1905px;top:164px;width:14px;height:16px;background:#8faad4"></div>
<svg class="a" style="left:1908px;top:169px" width="9" height="5"><path d="M0 5h9l-4.5-4.5z" fill="#34496c"/></svg>
<div class="a" style="left:1906px;top:181px;width:13px;height:334px;border:1px solid #6f87b0;border-radius:2px;background:linear-gradient(90deg,#f3f6fb,#e3e9f2 50%,#c6d2e3 70%,#dfe6f0)"></div>
<div class="a" style="left:1909px;top:345px;width:7px;height:1px;background:#7a8aa8;box-shadow:0 2px #7a8aa8,0 4px #7a8aa8"></div>
<svg class="a" style="left:1908px;top:999px" width="9" height="5"><path d="M0 0h9l-4.5 4.5z" fill="#6e83a8"/></svg>
<div class="a" style="left:1905px;top:1008px;width:14px;height:49px;background:#b3c9ea"></div>
<svg class="a" style="left:1907px;top:1013px" width="10" height="8"><path d="M1 4 L5 0.5 L9 4z M1 8 L5 4.5 L9 8z" fill="#222"/></svg>
<svg class="a" style="left:1907px;top:1027px" width="10" height="10"><circle cx="5" cy="5" r="4" fill="#b8b8b8" stroke="#555"/></svg>
<svg class="a" style="left:1907px;top:1044px" width="10" height="8"><path d="M1 0 L5 3.5 L9 0z M1 4 L5 7.5 L9 4z" fill="#222"/></svg>
<div class="a" style="left:0;top:1057px;width:1920px;height:23px;border-top:1px solid #6a8ec4;background:linear-gradient(#e2ecfa 0,#d3e2f7 30%,#bcd3f1 50%,#c4d9f3 80%,#d6e5f8 100%)"></div>
<div class="sb" style="left:8px;top:1062px">Page: 1 of 5</div>
<div class="a" style="left:77px;top:1059px;width:1px;height:20px;background:#9db8de;box-shadow:1px 0 #f2f7fd"></div>
<div class="sb" style="left:86px;top:1062px">Words: 2,272</div>
<div class="a" style="left:162px;top:1059px;width:1px;height:20px;background:#9db8de;box-shadow:1px 0 #f2f7fd"></div>
<svg class="a" style="left:170px;top:1060px" width="17" height="16" viewBox="0 0 17 16"><path d="M1 11 L8 7 L15 11 L8 15z" fill="#e8eef8" stroke="#3a5aa8"/><path d="M1 11 v1.5 L8 16 L15 12.5 V11" fill="#4a6ac0"/><path d="M8 2 L15 9 M15 2 L8 9" stroke="#e03020" stroke-width="2.2"/></svg>
<div class="a" style="left:195px;top:1059px;width:1px;height:20px;background:#9db8de;box-shadow:1px 0 #f2f7fd"></div>
<div class="a" style="left:1638px;top:1059px;width:1px;height:20px;background:#9db8de;box-shadow:1px 0 #f2f7fd"></div>
<div class="a" style="left:1645px;top:1060px;width:91px;height:17px;border:1px solid #a3bde0;border-radius:3px;background:linear-gradient(#e9f1fb,#cfdff3)"></div>
<div class="a" style="left:1646px;top:1061px;width:18px;height:15px;background:linear-gradient(#ffe3a0,#ffc35a 50%,#ffb040 51%,#ffd890)"></div>
<div class="a" style="left:1664px;top:1061px;width:1px;height:15px;background:#b7cbe5"></div>
<div class="a" style="left:1682px;top:1061px;width:1px;height:15px;background:#b7cbe5"></div>
<div class="a" style="left:1700px;top:1061px;width:1px;height:15px;background:#b7cbe5"></div>
<div class="a" style="left:1718px;top:1061px;width:1px;height:15px;background:#b7cbe5"></div>
<svg class="a" style="left:1650px;top:1062px" width="11" height="12"><rect x="0.5" y="0.5" width="10" height="11" fill="#fff" stroke="#333"/><path d="M2 3h7M2 5h7M2 7h7M2 9h7" stroke="#333"/></svg>
<svg class="a" style="left:1667px;top:1062px" width="12" height="12"><path d="M0.5 1 h5 v10 h-5z M6.5 1 h5 v10 h-5z" fill="#fff" stroke="#555"/></svg>
<svg class="a" style="left:1685px;top:1062px" width="13" height="13"><rect x="0.5" y="0.5" width="10" height="9" fill="#fff" stroke="#555"/><circle cx="9.5" cy="9.5" r="3" fill="#3a9a4a"/></svg>
<svg class="a" style="left:1703px;top:1063px" width="11" height="11"><path d="M0 1h2M4 1h7M2 4h2M5 4h6M2 7h2M5 7h6M0 10h2M4 10h7" stroke="#666"/></svg>
<svg class="a" style="left:1721px;top:1063px" width="11" height="11"><path d="M0 1h11M0 4h11M0 7h11M0 10h11" stroke="#555"/></svg>
<div class="sb" style="left:1745px;top:1062px;font-size:11.5px;color:#2a2a80">100%</div>
<svg class="a" style="left:1780px;top:1059px" width="120" height="18" viewBox="0 0 120 18"><circle cx="9" cy="9" r="7.5" fill="#dce8f7" stroke="#6e8cba"/><rect x="5" y="8" width="8" height="2.5" fill="#333"/><path d="M18 9.5 H113" stroke="#8ea6c8" stroke-width="1"/><path d="M18 10.5 H113" stroke="#f4f8fd" stroke-width="1"/><path d="M63 2 H71 V12 L67 16 L63 12z" fill="#eef3fa" stroke="#6b84b0"/></svg>
<svg class="a" style="left:1898px;top:1059px" width="18" height="18" viewBox="0 0 18 18"><circle cx="9" cy="9" r="7.5" fill="#dce8f7" stroke="#6e8cba"/><rect x="5" y="8" width="8" height="2.5" fill="#333"/><rect x="7.75" y="5" width="2.5" height="8" fill="#333"/></svg>
</div>
</body></html>
